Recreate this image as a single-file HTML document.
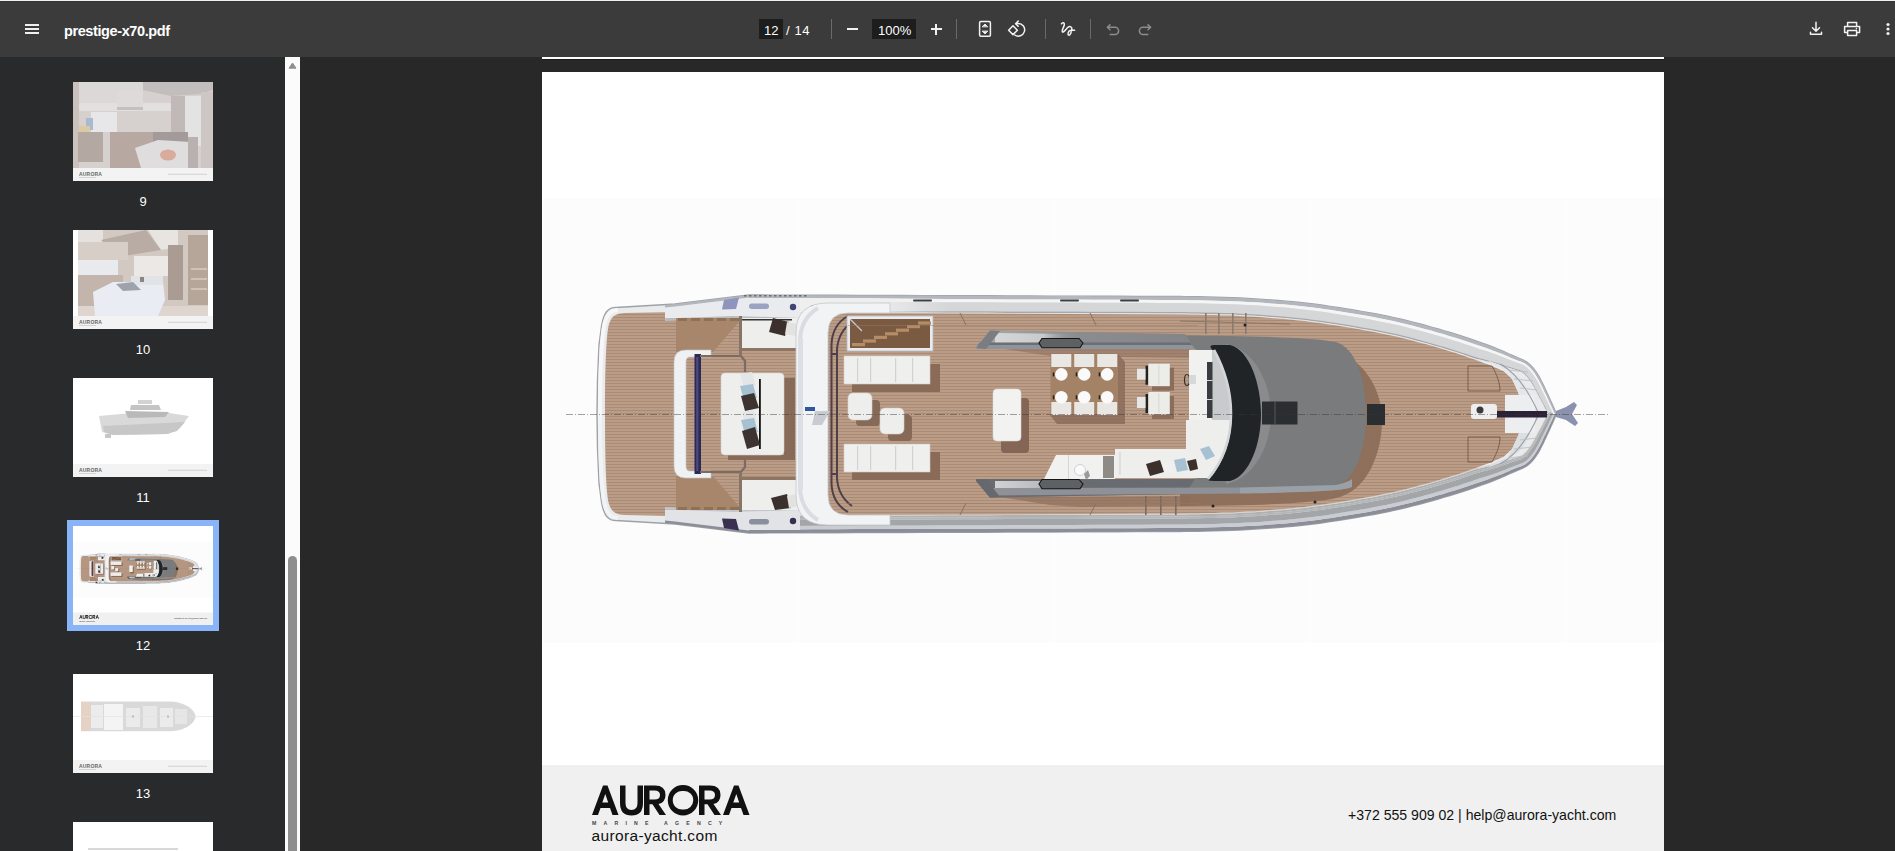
<!DOCTYPE html>
<html><head><meta charset="utf-8">
<style>
html,body{margin:0;padding:0;width:1895px;height:851px;overflow:hidden;background:#282828;font-family:"Liberation Sans",sans-serif;}
#tb{position:absolute;left:0;top:0;width:1895px;height:57px;background:#3b3b3b;border-top:1px solid #f2f2f2;box-sizing:border-box;}
#tbline{position:absolute;left:0;top:1px;width:1895px;height:1px;background:#343434;}
.abs{position:absolute;}
.t{position:absolute;color:#fff;white-space:nowrap;line-height:1;}
#side{position:absolute;left:0;top:57px;width:285px;height:794px;background:#292a2c;}
#sb{position:absolute;left:285px;top:57px;width:15px;height:794px;background:#fbfbfb;}
#thumb{position:absolute;left:288px;top:556px;width:9px;height:300px;background:#8e8e8e;border-radius:4.5px 4.5px 0 0;}
.th{position:absolute;left:73px;width:140px;height:99px;background:#fff;overflow:hidden;}
.lbl{position:absolute;width:140px;left:73px;text-align:center;color:#fff;font-size:13px;line-height:1;}
.sep{position:absolute;top:19px;width:1px;height:20px;background:#6a6a6a;}
</style></head><body>
<div id="tb"></div>
<div id="tbline"></div>
<div class="abs" style="left:25px;top:24px;width:14px;height:2px;background:#f0f0f0"></div>
<div class="abs" style="left:25px;top:28px;width:14px;height:2px;background:#f0f0f0"></div>
<div class="abs" style="left:25px;top:32px;width:14px;height:2px;background:#f0f0f0"></div>
<div class="t" id="title" style="left:64px;top:23.5px;font-size:14.5px;font-weight:bold;letter-spacing:-0.4px;">prestige-x70.pdf</div>

<div class="abs" style="left:759px;top:19px;width:24px;height:20px;background:#1d1d1d"></div>
<div class="t" style="left:764px;top:24px;font-size:13px;">12</div>
<div class="t" style="left:786px;top:24px;font-size:13px;letter-spacing:0.6px;">/ 14</div>
<div class="sep" style="left:831px"></div>
<div class="abs" style="left:847px;top:28px;width:11px;height:2px;background:#f0f0f0"></div>
<div class="abs" style="left:872px;top:19px;width:44px;height:20px;background:#1d1d1d"></div>
<div class="t" style="left:878px;top:24px;font-size:13px;">100%</div>
<div class="abs" style="left:931px;top:28px;width:11px;height:2px;background:#f0f0f0"></div>
<div class="abs" style="left:935px;top:24px;width:2px;height:11px;background:#f0f0f0"></div>
<div class="sep" style="left:956px"></div>
<div class="sep" style="left:1045px"></div>
<div class="sep" style="left:1090px"></div>


<svg class="abs" style="left:0;top:0" width="1895" height="56" viewBox="0 0 1895 56">
<g fill="none" stroke="#f2f2f2" stroke-width="1.5" stroke-linecap="round" stroke-linejoin="round">
 <rect x="979.6" y="21.6" width="10.8" height="14.6" rx="1.2"/>
 <path d="M982.3,26.6 L985,24 L987.7,26.6 Z M982.3,31.3 L985,34 L987.7,31.3 Z" fill="#f2f2f2" stroke-width="0.8"/>
 <path d="M1013,25.8 L1017.4,30.2 L1013,34.6 L1008.6,30.2 Z"/>
 <path d="M1016.5,23.6 L1018.3,23.5 A6.3,6.3 0 1,1 1014.8,35"/>
 <path d="M1018.2,21.1 L1015.6,23.7 L1018.2,26.3"/>
 <path d="M1061.4,23.8 C1062.5,22 1064.8,22.3 1064.3,25 C1063.8,27.5 1061.5,30 1062.3,31.8 C1063.2,33.2 1066,29 1068,27.3 C1070,25.8 1072.3,27 1071.8,29.5 C1071.3,32.5 1070,35.6 1068.8,35.3 C1067.5,35 1067.8,31.5 1070,30.5 C1071.5,29.9 1073,30.2 1074.6,30.2"/>
 <path d="M1816,22.2 L1816,31 M1812.5,27.7 L1816,31.2 L1819.5,27.7 M1810.5,32.2 L1810.5,34.3 L1821.5,34.3 L1821.5,32.2"/>
 <path d="M1847.6,26.3 L1847.6,22.6 L1856.6,22.6 L1856.6,26.3 M1847.6,32.6 L1844.6,32.6 L1844.6,26.5 L1859.6,26.5 L1859.6,32.6 L1856.6,32.6 M1847.6,30.6 L1856.6,30.6 L1856.6,35.6 L1847.6,35.6 Z"/>
</g>
<g fill="none" stroke="#8c8c8c" stroke-width="1.5" stroke-linecap="round" stroke-linejoin="round">
 <path d="M1110,24.8 L1107.3,27.3 L1110,29.8 M1107.5,27.3 L1115,27.3 A3.6,3.6 0 0,1 1115,34.5 L1110.2,34.5"/>
 <path d="M1148,24.8 L1150.7,27.3 L1148,29.8 M1150.5,27.3 L1143,27.3 A3.6,3.6 0 0,0 1143,34.5 L1147.8,34.5"/>
</g>
<g fill="#f2f2f2">
 <circle cx="1856.4" cy="28.6" r="0.8"/>
 <circle cx="1888" cy="24.5" r="1.6"/><circle cx="1888" cy="29" r="1.6"/><circle cx="1888" cy="33.5" r="1.6"/>
</g>
</svg>

<div id="side"></div>
<div class="th" style="top:82px"><svg width="140" height="99" viewBox="0 0 140 99">
<rect width="140" height="99" fill="#fff"/>
<rect x="0" y="0" width="140" height="86" fill="#d6d0ce"/>
<rect x="0" y="0" width="70" height="22" fill="#dcd8d7"/>
<path d="M70,0 L140,0 L140,8 L128,12 L98,14 L70,8 Z" fill="#c2bebd"/>
<rect x="0" y="21" width="100" height="8" fill="#e2dfdf"/>
<rect x="44" y="9" width="26" height="18" fill="#dedad9"/>
<rect x="44" y="25" width="26" height="3" fill="#c5bfbe"/>
<rect x="18" y="30" width="26" height="20" fill="#e7e7e9"/>
<rect x="13" y="36" width="7" height="12" fill="#a9bad0"/>
<rect x="6" y="44" width="11" height="8" fill="#d9cba4"/>
<rect x="0" y="0" width="6" height="86" fill="#cbc1bd"/>
<rect x="98" y="14" width="14" height="50" fill="#c0b9b8"/>
<rect x="112" y="14" width="16" height="50" fill="#e4e3e4"/>
<rect x="128" y="10" width="12" height="76" fill="#cdc6c4"/>
<rect x="5" y="50" width="25" height="30" fill="#b4a8a3"/>
<rect x="37" y="50" width="43" height="36" fill="#b7a9a1"/>
<rect x="80" y="50" width="35" height="12" fill="#a29b9a"/>
<path d="M62,66 L85,58 L118,60 L115,86 L68,86 Z" fill="#dfdddd"/>
<ellipse cx="95" cy="73" rx="8" ry="5.5" fill="#d8ab9d"/>
<rect x="115" y="55" width="10" height="31" fill="#b9b1af"/>
<rect x="0" y="86" width="140" height="13" fill="#f3f3f3"/><text x="6" y="93.5" font-family="Liberation Sans" font-weight="bold" font-size="5" fill="#666" letter-spacing="0.2">AURORA</text><rect x="6" y="95.3" width="17" height="0.7" fill="#c4c4c4"/><rect x="95" y="91.8" width="39" height="0.9" fill="#cdcdcd"/>
</svg></div>
<div class="lbl" style="top:195px">9</div>

<div class="th" style="top:230px"><svg width="140" height="99" viewBox="0 0 140 99">
<rect width="140" height="99" fill="#fff"/>
<rect x="5" y="0" width="130" height="86" fill="#d3c9c3"/>
<rect x="5" y="0" width="25" height="12" fill="#e5e1de"/>
<path d="M75,0 L105,0 L105,17 L88,20 Z" fill="#e8e4e0"/>
<path d="M28,10 L73,0 L88,20 L45,27 Z" fill="#b8aca5"/>
<rect x="5" y="12" width="50" height="18" fill="#d8cec8"/>
<rect x="5" y="30" width="40" height="15" fill="#e8eaee"/>
<rect x="5" y="45" width="45" height="32" fill="#c4b5ac"/>
<rect x="61" y="26" width="34" height="20" fill="#ebe8e6"/>
<rect x="95" y="15" width="15" height="55" fill="#aa9c92"/>
<rect x="115" y="5" width="20" height="70" fill="#b6a69a"/>
<rect x="118" y="38" width="16" height="2" fill="#cfc3b8"/>
<rect x="118" y="48" width="16" height="2" fill="#cfc3b8"/>
<rect x="118" y="58" width="16" height="2" fill="#cfc3b8"/>
<rect x="5" y="76" width="130" height="10" fill="#ddd5ce"/>
<path d="M20,62 L40,52 L90,52 L92,70 L85,86 L22,86 Z" fill="#e9edf3"/>
<path d="M58,46 L90,46 L90,55 L58,55 Z" fill="#e2e3e6"/>
<path d="M43,54 L60,52 L68,60 L50,61 Z" fill="#9ea3ab"/>
<rect x="67" y="47" width="4" height="5" fill="#8a8580"/>
<rect x="0" y="86" width="140" height="13" fill="#f3f3f3"/><text x="6" y="93.5" font-family="Liberation Sans" font-weight="bold" font-size="5" fill="#666" letter-spacing="0.2">AURORA</text><rect x="6" y="95.3" width="17" height="0.7" fill="#c4c4c4"/><rect x="95" y="91.8" width="39" height="0.9" fill="#cdcdcd"/>
</svg></div>
<div class="lbl" style="top:343px">10</div>

<div class="th" style="top:378px"><svg width="140" height="99" viewBox="0 0 140 99">
<rect width="140" height="99" fill="#fff"/>
<path d="M26,38 L48,36 L68,34 L96,35 L116,38 L107,50 L95,56 L40,57 L29,54 Z" fill="#d9d9d9"/>
<path d="M30,48 L112,44 L104,53 L94,56 L40,57 L31,54 Z" fill="#c7c7c7"/>
<path d="M52,33 L96,34 L92,39 L55,40 Z" fill="#b9b9b9"/>
<path d="M58,27 L86,27 L88,32 L57,32 Z" fill="#c4c4c4"/>
<rect x="65" y="22" width="14" height="4" fill="#d2d2d2"/>
<rect x="32" y="56" width="6" height="4" fill="#c7c7c7"/>
<rect x="0" y="86" width="140" height="13" fill="#f3f3f3"/><text x="6" y="93.5" font-family="Liberation Sans" font-weight="bold" font-size="5" fill="#666" letter-spacing="0.2">AURORA</text><rect x="6" y="95.3" width="17" height="0.7" fill="#c4c4c4"/><rect x="95" y="91.8" width="39" height="0.9" fill="#cdcdcd"/>
</svg></div>
<div class="lbl" style="top:491px">11</div>

<div class="abs" style="left:67px;top:520px;width:152px;height:111px;background:#8ab4f8"></div>
<div class="th" style="top:526px"><svg width="140" height="99" viewBox="542 72 1122 793"><use href="#pg"/></svg></div>
<div class="lbl" style="top:639px">12</div>

<div class="th" style="top:674px"><svg width="140" height="99" viewBox="0 0 140 99">
<rect width="140" height="99" fill="#fff"/>
<path d="M8,27.5 L98,27.5 C112,28 122,36 122.6,42.5 C122,49 112,56.8 98,57.3 L8,57.3 Z" fill="#d9d9d9"/>
<rect x="8" y="28" width="9.5" height="29" fill="#e6d2c4"/>
<rect x="18" y="31" width="12" height="23" fill="#ececec"/>
<rect x="31" y="30" width="19" height="26" fill="#f4f4f4"/>
<rect x="53" y="34" width="14" height="19" fill="#ebebeb"/>
<rect x="70" y="32" width="14" height="22" fill="#e8e8e8"/>
<rect x="87" y="34" width="13" height="19" fill="#ebebeb"/>
<rect x="102" y="35" width="12" height="15" fill="#e6e6e6"/>
<circle cx="60" cy="42.5" r="1" fill="#888"/><circle cx="95" cy="42.5" r="1" fill="#888"/>
<line x1="0" y1="42.5" x2="140" y2="42.5" stroke="#e0e0e0" stroke-width="0.6"/>
<rect x="0" y="86" width="140" height="13" fill="#f3f3f3"/><text x="6" y="93.5" font-family="Liberation Sans" font-weight="bold" font-size="5" fill="#666" letter-spacing="0.2">AURORA</text><rect x="6" y="95.3" width="17" height="0.7" fill="#c4c4c4"/><rect x="95" y="91.8" width="39" height="0.9" fill="#cdcdcd"/>
</svg></div>
<div class="lbl" style="top:787px">13</div>

<div class="th" style="top:822px"><svg width="140" height="99" viewBox="0 0 140 99">
<rect width="140" height="99" fill="#fff"/>
<rect x="15" y="26" width="90" height="2" fill="#d8d8d8"/>
</svg></div>

<div id="sb"></div>
<div id="thumb"></div>
<svg class="abs" style="left:285px;top:57px" width="15" height="16"><path d="M4,11.2 L7.5,6 L11,11.2 Z" fill="#8e8e8e" stroke="#8e8e8e" stroke-width="1" stroke-linejoin="round"/></svg>

<div class="abs" style="left:542px;top:57px;width:1122px;height:1.5px;background:#fff"></div><div class="abs" style="left:542px;top:58.5px;width:1122px;height:1.5px;background:#1b1b1b"></div>
<svg class="abs" style="left:542px;top:72px" width="1122" height="793" viewBox="542 72 1122 793">
<defs>
<linearGradient id="armT" gradientUnits="userSpaceOnUse" x1="990" y1="0" x2="1190" y2="0"><stop offset="0" stop-color="#a5a7aa"/><stop offset="0.45" stop-color="#8a8c8f"/><stop offset="1" stop-color="#838588"/></linearGradient>
<linearGradient id="sheenT" gradientUnits="userSpaceOnUse" x1="995" y1="0" x2="1075" y2="0"><stop offset="0" stop-color="#d6d7d9"/><stop offset="0.6" stop-color="#c9cacc"/><stop offset="1" stop-color="#8a8c8f" stop-opacity="0"/></linearGradient>
<linearGradient id="sheenB" gradientUnits="userSpaceOnUse" x1="995" y1="0" x2="1075" y2="0"><stop offset="0" stop-color="#d0d2d4"/><stop offset="0.6" stop-color="#b8babd"/><stop offset="1" stop-color="#686b6f" stop-opacity="0"/></linearGradient>
<linearGradient id="railW" gradientUnits="userSpaceOnUse" x1="749" y1="0" x2="949" y2="0"><stop offset="0" stop-color="#f0f0f1"/><stop offset="0.6" stop-color="#eeeeef"/><stop offset="1" stop-color="#eeeeef" stop-opacity="0"/></linearGradient>
<pattern id="teak" patternUnits="userSpaceOnUse" x="0" y="0" width="40" height="3">
<rect width="40" height="3" fill="#bb9c87"/>
<rect y="2" width="40" height="1" fill="#aa8b76"/>
</pattern>
</defs>
<g id="pg">
<rect x="542" y="72" width="1122" height="793" fill="#fff"/>
<rect x="543" y="198" width="1120" height="445" fill="#fcfcfc"/>
<rect x="798" y="198" width="1" height="445" fill="#fefefe"/>
<rect x="1054" y="198" width="1" height="445" fill="#fefefe"/>
<rect x="1310" y="198" width="1" height="445" fill="#fefefe"/>
<rect x="1566" y="198" width="1" height="445" fill="#fefefe"/>
<rect x="542" y="765" width="1122" height="100" fill="#f0f0f0"/>
<path d="M597.0,414.0 L597.5,380.0 L599.0,345.0 L601.5,326.0 L602.5,321.2 L603.7,317.2 L605.1,314.0 L606.7,311.5 L608.6,309.7 L610.7,308.4 L613.2,307.7 L616.0,307.5 L675.0,304.0 L749.0,295.0 L770.5,295.1 L792.1,295.1 L813.6,295.2 L835.2,295.3 L856.8,295.4 L878.3,295.4 L899.9,295.5 L921.4,295.6 L943.0,295.7 L964.5,295.8 L986.0,295.8 L1007.6,295.9 L1029.2,296.0 L1050.7,296.1 L1072.2,296.1 L1093.8,296.2 L1115.3,296.3 L1136.9,296.4 L1158.5,296.4 L1180.0,296.5 L1184.6,296.6 L1190.8,296.7 L1198.1,296.8 L1206.2,297.0 L1214.9,297.2 L1223.6,297.4 L1232.1,297.7 L1240.0,298.0 L1247.6,298.4 L1255.2,298.9 L1262.9,299.4 L1270.6,299.9 L1278.2,300.5 L1285.7,301.1 L1293.0,301.8 L1300.0,302.5 L1306.7,303.2 L1313.2,304.0 L1319.5,304.8 L1325.6,305.7 L1331.7,306.6 L1337.7,307.5 L1343.8,308.5 L1350.0,309.5 L1356.2,310.5 L1362.5,311.6 L1368.8,312.7 L1375.0,313.8 L1381.2,315.0 L1387.5,316.3 L1393.8,317.6 L1400.0,319.0 L1406.3,320.5 L1412.7,322.1 L1419.2,323.8 L1425.6,325.5 L1432.0,327.3 L1438.2,329.0 L1444.2,330.8 L1450.0,332.5 L1455.6,334.2 L1461.1,336.0 L1466.5,337.7 L1471.7,339.5 L1476.6,341.2 L1481.4,342.9 L1485.9,344.5 L1490.0,346.0 L1493.8,347.4 L1497.2,348.8 L1500.4,350.1 L1503.3,351.4 L1506.1,352.6 L1508.6,353.8 L1511.1,354.9 L1513.5,356.0 L1515.8,357.0 L1517.9,357.8 L1519.8,358.6 L1521.6,359.4 L1523.3,360.1 L1524.9,361.0 L1526.5,361.9 L1528.0,363.0 L1529.5,364.2 L1530.8,365.5 L1532.1,366.9 L1533.3,368.3 L1534.5,369.8 L1535.7,371.5 L1536.8,373.2 L1538.0,375.0 L1539.2,376.9 L1540.3,379.0 L1541.4,381.2 L1542.6,383.5 L1543.7,385.8 L1544.8,388.2 L1545.9,390.6 L1547.0,393.0 L1548.2,395.5 L1549.5,398.3 L1550.8,401.2 L1552.1,404.1 L1553.3,406.9 L1554.4,409.4 L1555.3,411.4 L1556.0,413.0 L1555.3,416.6 L1554.4,418.6 L1553.3,421.1 L1552.1,423.9 L1550.8,426.8 L1549.5,429.7 L1548.2,432.5 L1547.0,435.0 L1545.9,437.4 L1544.8,439.8 L1543.7,442.2 L1542.6,444.5 L1541.4,446.8 L1540.3,449.0 L1539.2,451.1 L1538.0,453.0 L1536.8,454.8 L1535.7,456.5 L1534.5,458.2 L1533.3,459.7 L1532.1,461.1 L1530.8,462.5 L1529.5,463.8 L1528.0,465.0 L1526.5,466.1 L1524.9,467.0 L1523.3,467.9 L1521.6,468.6 L1519.8,469.4 L1517.9,470.2 L1515.8,471.0 L1513.5,472.0 L1511.1,473.1 L1508.6,474.2 L1506.1,475.4 L1503.3,476.6 L1500.4,477.9 L1497.2,479.2 L1493.8,480.6 L1490.0,482.0 L1485.9,483.5 L1481.4,485.1 L1476.6,486.8 L1471.7,488.5 L1466.5,490.3 L1461.1,492.0 L1455.6,493.8 L1450.0,495.5 L1444.2,497.2 L1438.2,499.0 L1432.0,500.7 L1425.6,502.5 L1419.2,504.2 L1412.7,505.9 L1406.3,507.5 L1400.0,509.0 L1393.8,510.4 L1387.5,511.7 L1381.2,513.0 L1375.0,514.2 L1368.8,515.3 L1362.5,516.4 L1356.2,517.5 L1350.0,518.5 L1343.8,519.5 L1337.7,520.5 L1331.7,521.4 L1325.6,522.3 L1319.5,523.2 L1313.2,524.0 L1306.7,524.8 L1300.0,525.5 L1293.0,526.2 L1285.7,526.9 L1278.2,527.5 L1270.6,528.1 L1262.9,528.6 L1255.2,529.1 L1247.6,529.6 L1240.0,530.0 L1232.1,530.3 L1223.6,530.6 L1214.9,530.8 L1206.2,531.0 L1198.1,531.2 L1190.8,531.3 L1184.6,531.4 L1180.0,531.5 L1158.5,531.6 L1136.9,531.6 L1115.3,531.7 L1093.8,531.8 L1072.2,531.9 L1050.7,532.0 L1029.2,532.0 L1007.6,532.1 L986.0,532.2 L964.5,532.2 L943.0,532.3 L921.4,532.4 L899.9,532.5 L878.3,532.5 L856.8,532.6 L835.2,532.7 L813.6,532.8 L792.1,532.9 L770.5,532.9 L749.0,533.0 L675.0,524.0 L616.0,520.5 L613.2,520.3 L610.7,519.6 L608.6,518.3 L606.7,516.5 L605.1,514.0 L603.7,510.8 L602.5,506.8 L601.5,502.0 L599.0,483.0 L597.5,448.0 L597.0,414.0 Z" fill="#e9eaec" stroke="#9ea2a7" stroke-width="1.4"/>
<path d="M605,414 C605,370 606,335 609,324 Q612,313 624,313 L676,312 L676,516 L624,515 Q612,515 609,504 C606,493 605,458 605,414 Z" fill="url(#teak)"/>
<path d="M600,414 C600,375 601.5,340 604,326 Q607,310 618,310" fill="none" stroke="#f7f7f8" stroke-width="4"/>
<path d="M600,414 C600,453 601.5,488 604,502 Q607,518 618,518" fill="none" stroke="#f2f3f4" stroke-width="4"/>
<path d="M749.0,295.0 L770.5,295.1 L792.1,295.1 L813.6,295.2 L835.2,295.3 L856.8,295.4 L878.3,295.4 L899.9,295.5 L921.4,295.6 L943.0,295.7 L964.5,295.8 L986.0,295.8 L1007.6,295.9 L1029.2,296.0 L1050.7,296.1 L1072.2,296.1 L1093.8,296.2 L1115.3,296.3 L1136.9,296.4 L1158.5,296.4 L1180.0,296.5 L1184.6,296.6 L1190.8,296.7 L1198.1,296.8 L1206.2,297.0 L1214.9,297.2 L1223.6,297.4 L1232.1,297.7 L1240.0,298.0 L1247.6,298.4 L1255.2,298.9 L1262.9,299.4 L1270.6,299.9 L1278.2,300.5 L1285.7,301.1 L1293.0,301.8 L1300.0,302.5 L1306.7,303.2 L1313.2,304.0 L1319.5,304.8 L1325.6,305.7 L1331.7,306.6 L1337.7,307.5 L1343.8,308.5 L1350.0,309.5 L1356.2,310.5 L1362.5,311.6 L1368.8,312.7 L1375.0,313.8 L1381.2,315.0 L1387.5,316.3 L1393.8,317.6 L1400.0,319.0 L1406.3,320.5 L1412.7,322.1 L1419.2,323.8 L1425.6,325.5 L1432.0,327.3 L1438.2,329.0 L1444.2,330.8 L1450.0,332.5 L1455.6,334.2 L1461.1,336.0 L1466.5,337.7 L1471.7,339.5 L1476.6,341.2 L1481.4,342.9 L1485.9,344.5 L1490.0,346.0 L1493.8,347.4 L1497.2,348.8 L1500.4,350.1 L1503.3,351.4 L1506.1,352.6 L1508.6,353.8 L1511.1,354.9 L1513.5,356.0 L1515.8,357.0 L1517.9,357.8 L1519.8,358.6 L1521.6,359.4 L1523.3,360.1 L1524.9,361.0 L1526.5,361.9 L1528.0,363.0 L1529.5,364.2 L1530.8,365.5 L1532.1,366.9 L1533.3,368.3 L1534.5,369.8 L1535.7,371.5 L1536.8,373.2 L1538.0,375.0 L1539.2,376.9 L1540.3,379.0 L1541.4,381.2 L1542.6,383.5 L1543.7,385.8 L1544.8,388.2 L1545.9,390.6 L1547.0,393.0 L1548.2,395.5 L1549.5,398.3 L1550.8,401.2 L1552.1,404.1 L1553.3,406.9 L1554.4,409.4 L1555.3,411.4 L1556.0,413.0 L1554.6,413.6 L1553.9,412.1 L1552.9,410.0 L1551.8,407.5 L1550.5,404.8 L1549.2,401.9 L1547.9,399.0 L1546.6,396.3 L1545.4,393.8 L1544.2,391.4 L1543.1,389.0 L1542.0,386.6 L1540.8,384.3 L1539.7,382.1 L1538.6,380.0 L1537.4,377.9 L1536.3,376.1 L1535.1,374.3 L1534.0,372.6 L1532.8,371.1 L1531.7,369.7 L1530.5,368.3 L1529.3,367.1 L1528.0,365.9 L1526.6,364.8 L1525.2,363.8 L1523.8,363.0 L1522.2,362.3 L1520.6,361.6 L1518.8,360.9 L1516.9,360.2 L1514.8,359.4 L1512.4,358.4 L1510.0,357.4 L1507.5,356.3 L1504.9,355.2 L1502.2,354.1 L1499.3,352.9 L1496.1,351.7 L1492.6,350.4 L1488.9,349.0 L1484.7,347.6 L1480.2,346.1 L1475.5,344.5 L1470.5,342.8 L1465.4,341.0 L1460.0,339.3 L1454.5,337.6 L1449.0,335.9 L1443.2,334.1 L1437.2,332.4 L1431.0,330.6 L1424.7,328.9 L1418.3,327.2 L1411.9,325.5 L1405.5,323.9 L1399.2,322.4 L1393.0,321.0 L1386.8,319.7 L1380.6,318.5 L1374.4,317.3 L1368.1,316.1 L1361.9,315.1 L1355.7,314.0 L1349.4,313.0 L1343.3,311.9 L1337.2,311.0 L1331.2,310.0 L1325.1,309.2 L1319.0,308.3 L1312.8,307.5 L1306.3,306.7 L1299.6,306.0 L1292.6,305.3 L1285.4,304.6 L1277.9,304.0 L1270.4,303.4 L1262.7,302.8 L1255.0,302.3 L1247.4,301.9 L1239.8,301.5 L1232.0,301.2 L1223.5,300.9 L1214.8,300.7 L1206.2,300.5 L1198.0,300.3 L1190.7,300.2 L1184.6,300.1 L1180.0,300.0 L1158.4,299.9 L1136.9,299.8 L1115.3,299.8 L1093.8,299.7 L1072.2,299.6 L1050.7,299.5 L1029.1,299.5 L1007.6,299.4 L986.0,299.3 L964.5,299.2 L942.9,299.2 L921.4,299.1 L899.8,299.0 L878.3,298.9 L856.7,298.9 L835.2,298.8 L813.6,298.7 L792.1,298.6 L770.5,298.6 L749.0,298.5 Z" fill="#b3b7bd" />
<path d="M749.0,298.5 L770.5,298.6 L792.1,298.6 L813.6,298.7 L835.2,298.8 L856.7,298.9 L878.3,298.9 L899.8,299.0 L921.4,299.1 L942.9,299.2 L964.5,299.2 L986.0,299.3 L1007.6,299.4 L1029.1,299.5 L1050.7,299.5 L1072.2,299.6 L1093.8,299.7 L1115.3,299.8 L1136.9,299.8 L1158.4,299.9 L1180.0,300.0 L1184.6,300.1 L1190.7,300.2 L1198.0,300.3 L1206.2,300.5 L1214.8,300.7 L1223.5,300.9 L1232.0,301.2 L1239.8,301.5 L1247.4,301.9 L1255.0,302.3 L1262.7,302.8 L1270.4,303.4 L1277.9,304.0 L1285.4,304.6 L1292.6,305.3 L1299.6,306.0 L1306.3,306.7 L1312.8,307.5 L1319.0,308.3 L1325.1,309.2 L1331.2,310.0 L1337.2,311.0 L1343.3,311.9 L1349.4,313.0 L1355.7,314.0 L1361.9,315.1 L1368.1,316.1 L1374.4,317.3 L1380.6,318.5 L1386.8,319.7 L1393.0,321.0 L1399.2,322.4 L1405.5,323.9 L1411.9,325.5 L1418.3,327.2 L1424.7,328.9 L1431.0,330.6 L1437.2,332.4 L1443.2,334.1 L1449.0,335.9 L1454.5,337.6 L1460.0,339.3 L1465.4,341.0 L1470.5,342.8 L1475.5,344.5 L1480.2,346.1 L1484.7,347.6 L1488.9,349.0 L1492.6,350.4 L1496.1,351.7 L1499.3,352.9 L1502.2,354.1 L1504.9,355.2 L1507.5,356.3 L1510.0,357.4 L1512.4,358.4 L1514.8,359.4 L1516.9,360.2 L1518.8,360.9 L1520.6,361.6 L1522.2,362.3 L1523.8,363.0 L1525.2,363.8 L1526.6,364.8 L1528.0,365.9 L1529.3,367.1 L1530.5,368.3 L1531.7,369.7 L1532.8,371.1 L1534.0,372.6 L1535.1,374.3 L1536.3,376.1 L1537.4,377.9 L1538.6,380.0 L1539.7,382.1 L1540.8,384.3 L1542.0,386.6 L1543.1,389.0 L1544.2,391.4 L1545.4,393.8 L1546.6,396.3 L1547.9,399.0 L1549.2,401.9 L1550.5,404.8 L1551.8,407.5 L1552.9,410.0 L1553.9,412.1 L1554.6,413.6 L1553.3,414.2 L1552.6,412.6 L1551.6,410.6 L1550.5,408.1 L1549.2,405.4 L1547.9,402.5 L1546.5,399.7 L1545.2,396.9 L1544.0,394.4 L1542.8,392.0 L1541.6,389.7 L1540.5,387.3 L1539.4,385.0 L1538.2,382.8 L1537.1,380.8 L1536.0,378.8 L1534.8,377.0 L1533.6,375.3 L1532.5,373.7 L1531.4,372.2 L1530.2,370.8 L1529.1,369.6 L1527.9,368.4 L1526.7,367.3 L1525.4,366.4 L1524.1,365.5 L1522.8,364.8 L1521.4,364.2 L1519.8,363.5 L1518.0,362.9 L1516.1,362.2 L1513.9,361.4 L1511.5,360.5 L1509.0,359.5 L1506.5,358.5 L1503.9,357.4 L1501.2,356.4 L1498.3,355.2 L1495.1,354.1 L1491.7,352.9 L1487.9,351.6 L1483.7,350.3 L1479.2,348.9 L1474.5,347.3 L1469.6,345.6 L1464.4,343.9 L1459.1,342.1 L1453.7,340.4 L1448.1,338.7 L1442.4,337.0 L1436.4,335.3 L1430.2,333.5 L1423.9,331.8 L1417.5,330.1 L1411.1,328.4 L1404.8,326.8 L1398.5,325.3 L1392.4,324.0 L1386.2,322.7 L1380.0,321.4 L1373.8,320.2 L1367.6,319.1 L1361.4,318.0 L1355.2,317.0 L1348.9,315.9 L1342.8,314.9 L1336.7,313.9 L1330.7,313.0 L1324.7,312.1 L1318.6,311.3 L1312.4,310.5 L1306.0,309.7 L1299.3,309.0 L1292.4,308.3 L1285.1,307.6 L1277.7,307.0 L1270.1,306.4 L1262.5,305.8 L1254.8,305.3 L1247.2,304.9 L1239.7,304.5 L1231.8,304.2 L1223.4,303.9 L1214.7,303.7 L1206.1,303.5 L1198.0,303.3 L1190.7,303.2 L1184.5,303.1 L1180.0,303.0 L1158.4,302.9 L1136.9,302.8 L1115.3,302.8 L1093.8,302.7 L1072.2,302.6 L1050.7,302.5 L1029.1,302.5 L1007.6,302.4 L986.0,302.3 L964.5,302.2 L942.9,302.2 L921.4,302.1 L899.8,302.0 L878.3,301.9 L856.7,301.9 L835.2,301.8 L813.6,301.7 L792.1,301.6 L770.5,301.6 L749.0,301.5 Z" fill="#f5f5f6" />
<path d="M749.0,301.5 L770.5,301.6 L792.1,301.6 L813.6,301.7 L835.2,301.8 L856.7,301.9 L878.3,301.9 L899.8,302.0 L921.4,302.1 L942.9,302.2 L964.5,302.2 L986.0,302.3 L1007.6,302.4 L1029.1,302.5 L1050.7,302.5 L1072.2,302.6 L1093.8,302.7 L1115.3,302.8 L1136.9,302.8 L1158.4,302.9 L1180.0,303.0 L1184.5,303.1 L1190.7,303.2 L1198.0,303.3 L1206.1,303.5 L1214.7,303.7 L1223.4,303.9 L1231.8,304.2 L1239.7,304.5 L1247.2,304.9 L1254.8,305.3 L1262.5,305.8 L1270.1,306.4 L1277.7,307.0 L1285.1,307.6 L1292.4,308.3 L1299.3,309.0 L1306.0,309.7 L1312.4,310.5 L1318.6,311.3 L1324.7,312.1 L1330.7,313.0 L1336.7,313.9 L1342.8,314.9 L1348.9,315.9 L1355.2,317.0 L1361.4,318.0 L1367.6,319.1 L1373.8,320.2 L1380.0,321.4 L1386.2,322.7 L1392.4,324.0 L1398.5,325.3 L1404.8,326.8 L1411.1,328.4 L1417.5,330.1 L1423.9,331.8 L1430.2,333.5 L1436.4,335.3 L1442.4,337.0 L1448.1,338.7 L1453.7,340.4 L1459.1,342.1 L1464.4,343.9 L1469.6,345.6 L1474.5,347.3 L1479.2,348.9 L1483.7,350.3 L1487.9,351.6 L1491.7,352.9 L1495.1,354.1 L1498.3,355.2 L1501.2,356.4 L1503.9,357.4 L1506.5,358.5 L1509.0,359.5 L1511.5,360.5 L1513.9,361.4 L1516.1,362.2 L1518.0,362.9 L1519.8,363.5 L1521.4,364.2 L1522.8,364.8 L1524.1,365.5 L1525.4,366.4 L1526.7,367.3 L1527.9,368.4 L1529.1,369.6 L1530.2,370.8 L1531.4,372.2 L1532.5,373.7 L1533.6,375.3 L1534.8,377.0 L1536.0,378.8 L1537.1,380.8 L1538.2,382.8 L1539.4,385.0 L1540.5,387.3 L1541.6,389.7 L1542.8,392.0 L1544.0,394.4 L1545.2,396.9 L1546.5,399.7 L1547.9,402.5 L1549.2,405.4 L1550.5,408.1 L1551.6,410.6 L1552.6,412.6 L1553.3,414.2 L1549.6,415.8 L1548.9,414.3 L1547.8,412.3 L1546.6,409.8 L1545.3,407.1 L1543.9,404.3 L1542.4,401.5 L1541.1,398.8 L1539.8,396.4 L1538.5,394.0 L1537.3,391.7 L1536.1,389.4 L1534.9,387.2 L1533.8,385.1 L1532.6,383.1 L1531.5,381.4 L1530.4,379.7 L1529.2,378.2 L1528.1,376.7 L1527.0,375.4 L1525.9,374.3 L1524.9,373.3 L1523.9,372.4 L1522.9,371.7 L1521.8,371.0 L1520.8,370.5 L1519.8,370.1 L1518.7,369.7 L1517.3,369.3 L1515.6,368.8 L1513.6,368.3 L1511.3,367.6 L1508.7,366.7 L1506.1,365.9 L1503.5,365.0 L1500.9,364.1 L1498.2,363.2 L1495.3,362.3 L1492.1,361.4 L1488.7,360.4 L1485.0,359.5 L1480.8,358.4 L1476.2,357.3 L1471.5,355.8 L1466.7,354.1 L1461.6,352.4 L1456.3,350.7 L1451.0,349.0 L1445.5,347.3 L1439.9,345.7 L1433.9,343.9 L1427.8,342.2 L1421.5,340.5 L1415.2,338.8 L1408.9,337.1 L1402.7,335.6 L1396.5,334.1 L1390.5,332.8 L1384.4,331.5 L1378.3,330.2 L1372.2,329.1 L1366.0,328.0 L1359.9,326.9 L1353.7,325.8 L1347.5,324.8 L1341.3,323.8 L1335.3,322.8 L1329.4,321.9 L1323.4,321.0 L1317.4,320.2 L1311.3,319.4 L1305.0,318.6 L1298.4,317.9 L1291.5,317.2 L1284.3,316.6 L1277.0,315.9 L1269.5,315.4 L1261.9,314.8 L1254.3,314.3 L1246.7,313.9 L1239.3,313.5 L1231.5,313.1 L1223.1,312.9 L1214.5,312.6 L1205.9,312.5 L1197.8,312.3 L1190.5,312.2 L1184.3,312.1 L1179.9,312.0 L1158.4,311.9 L1136.8,311.8 L1115.3,311.8 L1093.7,311.7 L1072.2,311.6 L1050.6,311.5 L1029.1,311.5 L1007.5,311.4 L986.0,311.3 L964.4,311.2 L942.9,311.2 L921.3,311.1 L899.8,311.0 L878.2,310.9 L856.7,310.9 L835.1,310.8 L813.6,310.7 L792.0,310.6 L770.5,310.6 L748.9,310.5 Z" fill="#d5d6d8" />
<path d="M748.9,310.5 L770.5,310.6 L792.0,310.6 L813.6,310.7 L835.1,310.8 L856.7,310.9 L878.2,310.9 L899.8,311.0 L921.3,311.1 L942.9,311.2 L964.4,311.2 L986.0,311.3 L1007.5,311.4 L1029.1,311.5 L1050.6,311.5 L1072.2,311.6 L1093.7,311.7 L1115.3,311.8 L1136.8,311.8 L1158.4,311.9 L1179.9,312.0 L1184.3,312.1 L1190.5,312.2 L1197.8,312.3 L1205.9,312.5 L1214.5,312.6 L1223.1,312.9 L1231.5,313.1 L1239.3,313.5 L1246.7,313.9 L1254.3,314.3 L1261.9,314.8 L1269.5,315.4 L1277.0,315.9 L1284.3,316.6 L1291.5,317.2 L1298.4,317.9 L1305.0,318.6 L1311.3,319.4 L1317.4,320.2 L1323.4,321.0 L1329.4,321.9 L1335.3,322.8 L1341.3,323.8 L1347.5,324.8 L1353.7,325.8 L1359.9,326.9 L1366.0,328.0 L1372.2,329.1 L1378.3,330.2 L1384.4,331.5 L1390.5,332.8 L1396.5,334.1 L1402.7,335.6 L1408.9,337.1 L1415.2,338.8 L1421.5,340.5 L1427.8,342.2 L1433.9,343.9 L1439.9,345.7 L1445.5,347.3 L1451.0,349.0 L1456.3,350.7 L1461.6,352.4 L1466.7,354.1 L1471.5,355.8 L1476.2,357.3 L1480.8,358.4 L1485.0,359.5 L1488.7,360.4 L1492.1,361.4 L1495.3,362.3 L1498.2,363.2 L1500.9,364.1 L1503.5,365.0 L1506.1,365.9 L1508.7,366.7 L1511.3,367.6 L1513.6,368.3 L1515.6,368.8 L1517.3,369.3 L1518.7,369.7 L1519.8,370.1 L1520.8,370.5 L1521.8,371.0 L1522.9,371.7 L1523.9,372.4 L1524.9,373.3 L1525.9,374.3 L1527.0,375.4 L1528.1,376.7 L1529.2,378.2 L1530.4,379.7 L1531.5,381.4 L1532.6,383.1 L1533.8,385.1 L1534.9,387.2 L1536.1,389.4 L1537.3,391.7 L1538.5,394.0 L1539.8,396.4 L1541.1,398.8 L1542.4,401.5 L1543.9,404.3 L1545.3,407.1 L1546.6,409.8 L1547.8,412.3 L1548.9,414.3 L1549.6,415.8 L1549.0,416.1 L1548.2,414.6 L1547.2,412.5 L1546.0,410.1 L1544.6,407.4 L1543.2,404.6 L1541.8,401.8 L1540.4,399.2 L1539.1,396.7 L1537.8,394.4 L1536.6,392.0 L1535.4,389.7 L1534.2,387.5 L1533.0,385.5 L1531.9,383.5 L1530.7,381.8 L1529.6,380.2 L1528.5,378.7 L1527.3,377.2 L1526.3,376.0 L1525.2,374.9 L1524.2,373.9 L1523.2,373.1 L1522.2,372.4 L1521.2,371.8 L1520.3,371.3 L1519.3,371.0 L1518.2,370.7 L1516.9,370.3 L1515.2,369.8 L1513.2,369.3 L1510.9,368.6 L1508.3,367.8 L1505.7,366.9 L1503.1,366.1 L1500.4,365.2 L1497.7,364.3 L1494.8,363.5 L1491.6,362.6 L1488.2,361.7 L1484.5,360.8 L1480.3,359.8 L1475.7,358.7 L1471.0,357.2 L1466.2,355.6 L1461.1,353.8 L1455.9,352.1 L1450.5,350.4 L1445.1,348.8 L1439.4,347.1 L1433.5,345.4 L1427.4,343.6 L1421.1,341.9 L1414.8,340.2 L1408.5,338.6 L1402.3,337.0 L1396.2,335.6 L1390.1,334.2 L1384.1,332.9 L1378.0,331.7 L1371.9,330.6 L1365.8,329.4 L1359.6,328.4 L1353.4,327.3 L1347.2,326.3 L1341.1,325.3 L1335.1,324.3 L1329.2,323.4 L1323.2,322.5 L1317.2,321.7 L1311.1,320.9 L1304.8,320.1 L1298.2,319.4 L1291.4,318.7 L1284.2,318.1 L1276.9,317.4 L1269.4,316.9 L1261.8,316.3 L1254.2,315.8 L1246.6,315.4 L1239.2,315.0 L1231.4,314.6 L1223.1,314.4 L1214.5,314.1 L1205.9,314.0 L1197.8,313.8 L1190.5,313.7 L1184.3,313.6 L1179.9,313.5 L1158.4,313.4 L1136.8,313.3 L1115.3,313.3 L1093.7,313.2 L1072.2,313.1 L1050.6,313.0 L1029.1,313.0 L1007.5,312.9 L986.0,312.8 L964.4,312.7 L942.9,312.7 L921.3,312.6 L899.8,312.5 L878.2,312.4 L856.7,312.4 L835.1,312.3 L813.6,312.2 L792.0,312.1 L770.5,312.1 L748.9,312.0 Z" fill="#a6a8ab" />
<path d="M748.9,312.0 L770.5,312.1 L792.0,312.1 L813.6,312.2 L835.1,312.3 L856.7,312.4 L878.2,312.4 L899.8,312.5 L921.3,312.6 L942.9,312.7 L964.4,312.7 L986.0,312.8 L1007.5,312.9 L1029.1,313.0 L1050.6,313.0 L1072.2,313.1 L1093.7,313.2 L1115.3,313.3 L1136.8,313.3 L1158.4,313.4 L1179.9,313.5 L1184.3,313.6 L1190.5,313.7 L1197.8,313.8 L1205.9,314.0 L1214.5,314.1 L1223.1,314.4 L1231.4,314.6 L1239.2,315.0 L1246.6,315.4 L1254.2,315.8 L1261.8,316.3 L1269.4,316.9 L1276.9,317.4 L1284.2,318.1 L1291.4,318.7 L1298.2,319.4 L1304.8,320.1 L1311.1,320.9 L1317.2,321.7 L1323.2,322.5 L1329.2,323.4 L1335.1,324.3 L1341.1,325.3 L1347.2,326.3 L1353.4,327.3 L1359.6,328.4 L1365.8,329.4 L1371.9,330.6 L1378.0,331.7 L1384.1,332.9 L1390.1,334.2 L1396.2,335.6 L1402.3,337.0 L1408.5,338.6 L1414.8,340.2 L1421.1,341.9 L1427.4,343.6 L1433.5,345.4 L1439.4,347.1 L1445.1,348.8 L1450.5,350.4 L1455.9,352.1 L1461.1,353.8 L1466.2,355.6 L1471.0,357.2 L1475.7,358.7 L1480.3,359.8 L1484.5,360.8 L1488.2,361.7 L1491.6,362.6 L1494.8,363.5 L1497.7,364.3 L1500.4,365.2 L1503.1,366.1 L1505.7,366.9 L1508.3,367.8 L1510.9,368.6 L1513.2,369.3 L1515.2,369.8 L1516.9,370.3 L1518.2,370.7 L1519.3,371.0 L1520.3,371.3 L1521.2,371.8 L1522.2,372.4 L1523.2,373.1 L1524.2,373.9 L1525.2,374.9 L1526.3,376.0 L1527.3,377.2 L1528.5,378.7 L1529.6,380.2 L1530.7,381.8 L1531.9,383.5 L1533.0,385.5 L1534.2,387.5 L1535.4,389.7 L1536.6,392.0 L1537.8,394.4 L1539.1,396.7 L1540.4,399.2 L1541.8,401.8 L1543.2,404.6 L1544.6,407.4 L1546.0,410.1 L1547.2,412.5 L1548.2,414.6 L1549.0,416.1 L1548.5,416.3 L1547.7,414.8 L1546.7,412.8 L1545.5,410.3 L1544.1,407.7 L1542.7,404.9 L1541.2,402.1 L1539.8,399.4 L1538.5,397.0 L1537.2,394.6 L1536.0,392.3 L1534.8,390.0 L1533.6,387.8 L1532.4,385.8 L1531.3,383.9 L1530.2,382.1 L1529.0,380.6 L1527.9,379.1 L1526.7,377.6 L1525.7,376.4 L1524.6,375.3 L1523.7,374.4 L1522.7,373.6 L1521.7,373.0 L1520.8,372.4 L1519.8,372.0 L1518.9,371.7 L1517.9,371.4 L1516.5,371.0 L1514.9,370.6 L1512.9,370.1 L1510.5,369.4 L1507.9,368.6 L1505.3,367.8 L1502.7,366.9 L1500.0,366.1 L1497.3,365.3 L1494.4,364.4 L1491.2,363.6 L1487.9,362.7 L1484.1,361.8 L1479.9,360.9 L1475.3,359.8 L1470.6,358.4 L1465.8,356.7 L1460.7,355.0 L1455.5,353.3 L1450.2,351.6 L1444.7,349.9 L1439.1,348.2 L1433.2,346.5 L1427.1,344.8 L1420.8,343.1 L1414.5,341.4 L1408.2,339.7 L1402.0,338.2 L1395.9,336.7 L1389.9,335.4 L1383.8,334.1 L1377.8,332.9 L1371.7,331.7 L1365.5,330.6 L1359.4,329.5 L1353.2,328.5 L1347.0,327.5 L1340.9,326.5 L1334.9,325.5 L1329.0,324.6 L1323.0,323.7 L1317.1,322.9 L1310.9,322.1 L1304.7,321.3 L1298.1,320.6 L1291.2,319.9 L1284.1,319.3 L1276.8,318.6 L1269.3,318.1 L1261.7,317.5 L1254.1,317.0 L1246.5,316.6 L1239.1,316.2 L1231.4,315.8 L1223.1,315.6 L1214.4,315.3 L1205.9,315.2 L1197.8,315.0 L1190.5,314.9 L1184.3,314.8 L1179.9,314.7 L1158.4,314.6 L1136.8,314.5 L1115.3,314.5 L1093.7,314.4 L1072.2,314.3 L1050.6,314.2 L1029.1,314.2 L1007.5,314.1 L986.0,314.0 L964.4,313.9 L942.9,313.9 L921.3,313.8 L899.8,313.7 L878.2,313.6 L856.7,313.6 L835.1,313.5 L813.6,313.4 L792.0,313.3 L770.5,313.3 L748.9,313.2 Z" fill="#e3e3e3" />
<path d="M749.0,533.0 L770.5,532.9 L792.1,532.9 L813.6,532.8 L835.2,532.7 L856.8,532.6 L878.3,532.5 L899.9,532.5 L921.4,532.4 L943.0,532.3 L964.5,532.2 L986.0,532.2 L1007.6,532.1 L1029.2,532.0 L1050.7,532.0 L1072.2,531.9 L1093.8,531.8 L1115.3,531.7 L1136.9,531.6 L1158.5,531.6 L1180.0,531.5 L1184.6,531.4 L1190.8,531.3 L1198.1,531.2 L1206.2,531.0 L1214.9,530.8 L1223.6,530.6 L1232.1,530.3 L1240.0,530.0 L1247.6,529.6 L1255.2,529.1 L1262.9,528.6 L1270.6,528.1 L1278.2,527.5 L1285.7,526.9 L1293.0,526.2 L1300.0,525.5 L1306.7,524.8 L1313.2,524.0 L1319.5,523.2 L1325.6,522.3 L1331.7,521.4 L1337.7,520.5 L1343.8,519.5 L1350.0,518.5 L1356.2,517.5 L1362.5,516.4 L1368.8,515.3 L1375.0,514.2 L1381.2,513.0 L1387.5,511.7 L1393.8,510.4 L1400.0,509.0 L1406.3,507.5 L1412.7,505.9 L1419.2,504.2 L1425.6,502.5 L1432.0,500.7 L1438.2,499.0 L1444.2,497.2 L1450.0,495.5 L1455.6,493.8 L1461.1,492.0 L1466.5,490.3 L1471.7,488.5 L1476.6,486.8 L1481.4,485.1 L1485.9,483.5 L1490.0,482.0 L1493.8,480.6 L1497.2,479.2 L1500.4,477.9 L1503.3,476.6 L1506.1,475.4 L1508.6,474.2 L1511.1,473.1 L1513.5,472.0 L1515.8,471.0 L1517.9,470.2 L1519.8,469.4 L1521.6,468.6 L1523.3,467.9 L1524.9,467.0 L1526.5,466.1 L1528.0,465.0 L1529.5,463.8 L1530.8,462.5 L1532.1,461.1 L1533.3,459.7 L1534.5,458.2 L1535.7,456.5 L1536.8,454.8 L1538.0,453.0 L1539.2,451.1 L1540.3,449.0 L1541.4,446.8 L1542.6,444.5 L1543.7,442.2 L1544.8,439.8 L1545.9,437.4 L1547.0,435.0 L1548.2,432.5 L1549.5,429.7 L1550.8,426.8 L1552.1,423.9 L1553.3,421.1 L1554.4,418.6 L1555.3,416.6 L1556.0,415.0 L1554.6,414.4 L1553.9,415.9 L1552.9,418.0 L1551.8,420.5 L1550.5,423.2 L1549.2,426.1 L1547.9,429.0 L1546.6,431.7 L1545.4,434.2 L1544.2,436.6 L1543.1,439.0 L1542.0,441.4 L1540.8,443.7 L1539.7,445.9 L1538.6,448.0 L1537.4,450.1 L1536.3,451.9 L1535.1,453.7 L1534.0,455.4 L1532.8,456.9 L1531.7,458.3 L1530.5,459.7 L1529.3,460.9 L1528.0,462.1 L1526.6,463.2 L1525.2,464.2 L1523.8,465.0 L1522.2,465.7 L1520.6,466.4 L1518.8,467.1 L1516.9,467.8 L1514.8,468.6 L1512.4,469.6 L1510.0,470.6 L1507.5,471.7 L1504.9,472.8 L1502.2,473.9 L1499.3,475.1 L1496.1,476.3 L1492.6,477.6 L1488.9,479.0 L1484.7,480.4 L1480.2,481.9 L1475.5,483.5 L1470.5,485.2 L1465.4,487.0 L1460.0,488.7 L1454.5,490.4 L1449.0,492.1 L1443.2,493.9 L1437.2,495.6 L1431.0,497.4 L1424.7,499.1 L1418.3,500.8 L1411.9,502.5 L1405.5,504.1 L1399.2,505.6 L1393.0,507.0 L1386.8,508.3 L1380.6,509.5 L1374.4,510.7 L1368.1,511.9 L1361.9,512.9 L1355.7,514.0 L1349.4,515.0 L1343.3,516.1 L1337.2,517.0 L1331.2,518.0 L1325.1,518.8 L1319.0,519.7 L1312.8,520.5 L1306.3,521.3 L1299.6,522.0 L1292.6,522.7 L1285.4,523.4 L1277.9,524.0 L1270.4,524.6 L1262.7,525.2 L1255.0,525.7 L1247.4,526.1 L1239.8,526.5 L1232.0,526.8 L1223.5,527.1 L1214.8,527.3 L1206.2,527.5 L1198.0,527.7 L1190.7,527.8 L1184.6,527.9 L1180.0,528.0 L1158.4,528.1 L1136.9,528.2 L1115.3,528.2 L1093.8,528.3 L1072.2,528.4 L1050.7,528.5 L1029.1,528.5 L1007.6,528.6 L986.0,528.7 L964.5,528.8 L942.9,528.8 L921.4,528.9 L899.8,529.0 L878.3,529.1 L856.7,529.1 L835.2,529.2 L813.6,529.3 L792.1,529.4 L770.5,529.4 L749.0,529.5 Z" fill="#8b8e99" />
<path d="M749.0,529.5 L770.5,529.4 L792.1,529.4 L813.6,529.3 L835.2,529.2 L856.7,529.1 L878.3,529.1 L899.8,529.0 L921.4,528.9 L942.9,528.8 L964.5,528.8 L986.0,528.7 L1007.6,528.6 L1029.1,528.5 L1050.7,528.5 L1072.2,528.4 L1093.8,528.3 L1115.3,528.2 L1136.9,528.2 L1158.4,528.1 L1180.0,528.0 L1184.6,527.9 L1190.7,527.8 L1198.0,527.7 L1206.2,527.5 L1214.8,527.3 L1223.5,527.1 L1232.0,526.8 L1239.8,526.5 L1247.4,526.1 L1255.0,525.7 L1262.7,525.2 L1270.4,524.6 L1277.9,524.0 L1285.4,523.4 L1292.6,522.7 L1299.6,522.0 L1306.3,521.3 L1312.8,520.5 L1319.0,519.7 L1325.1,518.8 L1331.2,518.0 L1337.2,517.0 L1343.3,516.1 L1349.4,515.0 L1355.7,514.0 L1361.9,512.9 L1368.1,511.9 L1374.4,510.7 L1380.6,509.5 L1386.8,508.3 L1393.0,507.0 L1399.2,505.6 L1405.5,504.1 L1411.9,502.5 L1418.3,500.8 L1424.7,499.1 L1431.0,497.4 L1437.2,495.6 L1443.2,493.9 L1449.0,492.1 L1454.5,490.4 L1460.0,488.7 L1465.4,487.0 L1470.5,485.2 L1475.5,483.5 L1480.2,481.9 L1484.7,480.4 L1488.9,479.0 L1492.6,477.6 L1496.1,476.3 L1499.3,475.1 L1502.2,473.9 L1504.9,472.8 L1507.5,471.7 L1510.0,470.6 L1512.4,469.6 L1514.8,468.6 L1516.9,467.8 L1518.8,467.1 L1520.6,466.4 L1522.2,465.7 L1523.8,465.0 L1525.2,464.2 L1526.6,463.2 L1528.0,462.1 L1529.3,460.9 L1530.5,459.7 L1531.7,458.3 L1532.8,456.9 L1534.0,455.4 L1535.1,453.7 L1536.3,451.9 L1537.4,450.1 L1538.6,448.0 L1539.7,445.9 L1540.8,443.7 L1542.0,441.4 L1543.1,439.0 L1544.2,436.6 L1545.4,434.2 L1546.6,431.7 L1547.9,429.0 L1549.2,426.1 L1550.5,423.2 L1551.8,420.5 L1552.9,418.0 L1553.9,415.9 L1554.6,414.4 L1553.1,413.7 L1552.4,415.3 L1551.4,417.3 L1550.3,419.8 L1549.0,422.5 L1547.7,425.4 L1546.3,428.2 L1545.0,431.0 L1543.7,433.5 L1542.6,435.8 L1541.4,438.2 L1540.3,440.6 L1539.1,442.8 L1538.0,445.0 L1536.8,447.1 L1535.7,449.1 L1534.6,450.9 L1533.4,452.6 L1532.2,454.2 L1531.1,455.6 L1530.0,457.0 L1528.9,458.2 L1527.7,459.4 L1526.5,460.4 L1525.2,461.4 L1523.9,462.2 L1522.6,462.9 L1521.2,463.5 L1519.6,464.1 L1517.9,464.8 L1515.9,465.5 L1513.8,466.2 L1511.4,467.2 L1508.9,468.1 L1506.3,469.2 L1503.7,470.2 L1501.0,471.3 L1498.1,472.4 L1494.9,473.5 L1491.5,474.7 L1487.7,475.9 L1483.6,477.2 L1479.1,478.6 L1474.3,480.2 L1469.4,481.9 L1464.2,483.6 L1458.9,485.4 L1453.5,487.1 L1448.0,488.8 L1442.3,490.5 L1436.3,492.2 L1430.1,494.0 L1423.8,495.7 L1417.4,497.5 L1411.0,499.1 L1404.7,500.7 L1398.4,502.2 L1392.3,503.6 L1386.1,504.9 L1379.9,506.1 L1373.7,507.3 L1367.5,508.4 L1361.3,509.5 L1355.1,510.6 L1348.9,511.6 L1342.7,512.6 L1336.6,513.6 L1330.6,514.5 L1324.6,515.4 L1318.5,516.2 L1312.3,517.0 L1305.9,517.8 L1299.3,518.5 L1292.3,519.2 L1285.1,519.9 L1277.7,520.5 L1270.1,521.1 L1262.5,521.7 L1254.8,522.2 L1247.2,522.6 L1239.7,523.0 L1231.8,523.3 L1223.4,523.6 L1214.7,523.9 L1206.1,524.0 L1198.0,524.2 L1190.7,524.3 L1184.5,524.4 L1180.0,524.5 L1158.4,524.6 L1136.9,524.7 L1115.3,524.7 L1093.8,524.8 L1072.2,524.9 L1050.7,525.0 L1029.1,525.0 L1007.6,525.1 L986.0,525.2 L964.5,525.3 L942.9,525.3 L921.4,525.4 L899.8,525.5 L878.3,525.6 L856.7,525.6 L835.2,525.7 L813.6,525.8 L792.1,525.9 L770.5,525.9 L749.0,526.0 Z" fill="#c9ccd0" />
<path d="M749.0,526.0 L770.5,525.9 L792.1,525.9 L813.6,525.8 L835.2,525.7 L856.7,525.6 L878.3,525.6 L899.8,525.5 L921.4,525.4 L942.9,525.3 L964.5,525.3 L986.0,525.2 L1007.6,525.1 L1029.1,525.0 L1050.7,525.0 L1072.2,524.9 L1093.8,524.8 L1115.3,524.7 L1136.9,524.7 L1158.4,524.6 L1180.0,524.5 L1184.5,524.4 L1190.7,524.3 L1198.0,524.2 L1206.1,524.0 L1214.7,523.9 L1223.4,523.6 L1231.8,523.3 L1239.7,523.0 L1247.2,522.6 L1254.8,522.2 L1262.5,521.7 L1270.1,521.1 L1277.7,520.5 L1285.1,519.9 L1292.3,519.2 L1299.3,518.5 L1305.9,517.8 L1312.3,517.0 L1318.5,516.2 L1324.6,515.4 L1330.6,514.5 L1336.6,513.6 L1342.7,512.6 L1348.9,511.6 L1355.1,510.6 L1361.3,509.5 L1367.5,508.4 L1373.7,507.3 L1379.9,506.1 L1386.1,504.9 L1392.3,503.6 L1398.4,502.2 L1404.7,500.7 L1411.0,499.1 L1417.4,497.5 L1423.8,495.7 L1430.1,494.0 L1436.3,492.2 L1442.3,490.5 L1448.0,488.8 L1453.5,487.1 L1458.9,485.4 L1464.2,483.6 L1469.4,481.9 L1474.3,480.2 L1479.1,478.6 L1483.6,477.2 L1487.7,475.9 L1491.5,474.7 L1494.9,473.5 L1498.1,472.4 L1501.0,471.3 L1503.7,470.2 L1506.3,469.2 L1508.9,468.1 L1511.4,467.2 L1513.8,466.2 L1515.9,465.5 L1517.9,464.8 L1519.6,464.1 L1521.2,463.5 L1522.6,462.9 L1523.9,462.2 L1525.2,461.4 L1526.5,460.4 L1527.7,459.4 L1528.9,458.2 L1530.0,457.0 L1531.1,455.6 L1532.2,454.2 L1533.4,452.6 L1534.6,450.9 L1535.7,449.1 L1536.8,447.1 L1538.0,445.0 L1539.1,442.8 L1540.3,440.6 L1541.4,438.2 L1542.6,435.8 L1543.7,433.5 L1545.0,431.0 L1546.3,428.2 L1547.7,425.4 L1549.0,422.5 L1550.3,419.8 L1551.4,417.3 L1552.4,415.3 L1553.1,413.7 L1550.7,412.6 L1549.9,414.2 L1548.9,416.2 L1547.7,418.6 L1546.4,421.3 L1545.0,424.2 L1543.6,427.0 L1542.2,429.7 L1540.9,432.2 L1539.7,434.5 L1538.5,436.9 L1537.3,439.2 L1536.2,441.4 L1535.0,443.5 L1533.9,445.5 L1532.7,447.3 L1531.6,449.0 L1530.4,450.6 L1529.3,452.1 L1528.2,453.5 L1527.1,454.7 L1526.1,455.7 L1525.0,456.7 L1523.9,457.5 L1522.8,458.3 L1521.7,458.9 L1520.6,459.4 L1519.4,459.8 L1518.0,460.3 L1516.3,460.8 L1514.3,461.4 L1512.0,462.1 L1509.5,463.0 L1506.9,463.9 L1504.4,464.8 L1501.7,465.8 L1499.0,466.7 L1496.1,467.7 L1493.0,468.6 L1489.5,469.7 L1485.8,470.7 L1481.6,471.8 L1477.1,473.0 L1472.4,474.5 L1467.5,476.2 L1462.4,477.9 L1457.1,479.7 L1451.7,481.4 L1446.2,483.1 L1440.6,484.7 L1434.6,486.5 L1428.5,488.2 L1422.2,490.0 L1415.9,491.7 L1409.5,493.3 L1403.2,494.9 L1397.1,496.3 L1391.0,497.7 L1384.9,499.0 L1378.8,500.2 L1372.6,501.4 L1366.5,502.5 L1360.3,503.6 L1354.1,504.6 L1347.9,505.7 L1341.7,506.7 L1335.7,507.6 L1329.7,508.6 L1323.8,509.4 L1317.7,510.3 L1311.6,511.1 L1305.2,511.8 L1298.6,512.6 L1291.7,513.3 L1284.6,513.9 L1277.2,514.5 L1269.7,515.1 L1262.1,515.7 L1254.4,516.2 L1246.8,516.6 L1239.4,517.0 L1231.6,517.4 L1223.2,517.6 L1214.6,517.9 L1206.0,518.0 L1197.9,518.2 L1190.6,518.3 L1184.4,518.4 L1179.9,518.5 L1158.4,518.6 L1136.9,518.7 L1115.3,518.7 L1093.8,518.8 L1072.2,518.9 L1050.7,519.0 L1029.1,519.0 L1007.6,519.1 L986.0,519.2 L964.5,519.3 L942.9,519.3 L921.4,519.4 L899.8,519.5 L878.3,519.6 L856.7,519.6 L835.2,519.7 L813.6,519.8 L792.1,519.9 L770.5,519.9 L749.0,520.0 Z" fill="#a3a6a9" />
<path d="M749.0,520.0 L770.5,519.9 L792.1,519.9 L813.6,519.8 L835.2,519.7 L856.7,519.6 L878.3,519.6 L899.8,519.5 L921.4,519.4 L942.9,519.3 L964.5,519.3 L986.0,519.2 L1007.6,519.1 L1029.1,519.0 L1050.7,519.0 L1072.2,518.9 L1093.8,518.8 L1115.3,518.7 L1136.9,518.7 L1158.4,518.6 L1179.9,518.5 L1184.4,518.4 L1190.6,518.3 L1197.9,518.2 L1206.0,518.0 L1214.6,517.9 L1223.2,517.6 L1231.6,517.4 L1239.4,517.0 L1246.8,516.6 L1254.4,516.2 L1262.1,515.7 L1269.7,515.1 L1277.2,514.5 L1284.6,513.9 L1291.7,513.3 L1298.6,512.6 L1305.2,511.8 L1311.6,511.1 L1317.7,510.3 L1323.8,509.4 L1329.7,508.6 L1335.7,507.6 L1341.7,506.7 L1347.9,505.7 L1354.1,504.6 L1360.3,503.6 L1366.5,502.5 L1372.6,501.4 L1378.8,500.2 L1384.9,499.0 L1391.0,497.7 L1397.1,496.3 L1403.2,494.9 L1409.5,493.3 L1415.9,491.7 L1422.2,490.0 L1428.5,488.2 L1434.6,486.5 L1440.6,484.7 L1446.2,483.1 L1451.7,481.4 L1457.1,479.7 L1462.4,477.9 L1467.5,476.2 L1472.4,474.5 L1477.1,473.0 L1481.6,471.8 L1485.8,470.7 L1489.5,469.7 L1493.0,468.6 L1496.1,467.7 L1499.0,466.7 L1501.7,465.8 L1504.4,464.8 L1506.9,463.9 L1509.5,463.0 L1512.0,462.1 L1514.3,461.4 L1516.3,460.8 L1518.0,460.3 L1519.4,459.8 L1520.6,459.4 L1521.7,458.9 L1522.8,458.3 L1523.9,457.5 L1525.0,456.7 L1526.1,455.7 L1527.1,454.7 L1528.2,453.5 L1529.3,452.1 L1530.4,450.6 L1531.6,449.0 L1532.7,447.3 L1533.9,445.5 L1535.0,443.5 L1536.2,441.4 L1537.3,439.2 L1538.5,436.9 L1539.7,434.5 L1540.9,432.2 L1542.2,429.7 L1543.6,427.0 L1545.0,424.2 L1546.4,421.3 L1547.7,418.6 L1548.9,416.2 L1549.9,414.2 L1550.7,412.6 L1549.8,412.3 L1549.1,413.8 L1548.1,415.8 L1546.8,418.3 L1545.5,421.0 L1544.1,423.8 L1542.7,426.6 L1541.3,429.3 L1540.0,431.7 L1538.8,434.1 L1537.5,436.4 L1536.3,438.7 L1535.2,440.9 L1534.0,443.0 L1532.9,445.0 L1531.7,446.8 L1530.6,448.4 L1529.4,450.0 L1528.3,451.4 L1527.2,452.8 L1526.2,453.9 L1525.2,454.9 L1524.1,455.8 L1523.1,456.6 L1522.0,457.2 L1521.0,457.8 L1520.0,458.2 L1518.8,458.6 L1517.4,459.0 L1515.7,459.5 L1513.7,460.1 L1511.4,460.8 L1508.9,461.6 L1506.3,462.5 L1503.7,463.4 L1501.1,464.3 L1498.3,465.2 L1495.4,466.1 L1492.3,467.0 L1488.9,468.0 L1485.1,469.0 L1480.9,470.0 L1476.4,471.1 L1471.7,472.6 L1466.8,474.3 L1461.7,476.0 L1456.5,477.8 L1451.1,479.5 L1445.7,481.1 L1440.0,482.8 L1434.1,484.6 L1427.9,486.3 L1421.7,488.0 L1415.4,489.7 L1409.0,491.4 L1402.8,492.9 L1396.6,494.4 L1390.6,495.7 L1384.5,497.0 L1378.4,498.2 L1372.3,499.4 L1366.1,500.5 L1359.9,501.6 L1353.8,502.7 L1347.6,503.7 L1341.4,504.7 L1335.4,505.7 L1329.5,506.6 L1323.5,507.5 L1317.5,508.3 L1311.3,509.1 L1305.0,509.9 L1298.4,510.6 L1291.5,511.3 L1284.4,511.9 L1277.0,512.6 L1269.5,513.1 L1261.9,513.7 L1254.3,514.2 L1246.7,514.6 L1239.3,515.0 L1231.5,515.4 L1223.2,515.6 L1214.5,515.9 L1206.0,516.0 L1197.8,516.2 L1190.5,516.3 L1184.4,516.4 L1179.9,516.5 L1158.4,516.6 L1136.8,516.7 L1115.3,516.7 L1093.7,516.8 L1072.2,516.9 L1050.6,517.0 L1029.1,517.0 L1007.5,517.1 L986.0,517.2 L964.4,517.3 L942.9,517.3 L921.3,517.4 L899.8,517.5 L878.2,517.6 L856.7,517.6 L835.1,517.7 L813.6,517.8 L792.0,517.9 L770.5,517.9 L748.9,518.0 Z" fill="#b4b6b8" />
<path d="M748.9,518.0 L770.5,517.9 L792.0,517.9 L813.6,517.8 L835.1,517.7 L856.7,517.6 L878.2,517.6 L899.8,517.5 L921.3,517.4 L942.9,517.3 L964.4,517.3 L986.0,517.2 L1007.5,517.1 L1029.1,517.0 L1050.6,517.0 L1072.2,516.9 L1093.7,516.8 L1115.3,516.7 L1136.8,516.7 L1158.4,516.6 L1179.9,516.5 L1184.4,516.4 L1190.5,516.3 L1197.8,516.2 L1206.0,516.0 L1214.5,515.9 L1223.2,515.6 L1231.5,515.4 L1239.3,515.0 L1246.7,514.6 L1254.3,514.2 L1261.9,513.7 L1269.5,513.1 L1277.0,512.6 L1284.4,511.9 L1291.5,511.3 L1298.4,510.6 L1305.0,509.9 L1311.3,509.1 L1317.5,508.3 L1323.5,507.5 L1329.5,506.6 L1335.4,505.7 L1341.4,504.7 L1347.6,503.7 L1353.8,502.7 L1359.9,501.6 L1366.1,500.5 L1372.3,499.4 L1378.4,498.2 L1384.5,497.0 L1390.6,495.7 L1396.6,494.4 L1402.8,492.9 L1409.0,491.4 L1415.4,489.7 L1421.7,488.0 L1427.9,486.3 L1434.1,484.6 L1440.0,482.8 L1445.7,481.1 L1451.1,479.5 L1456.5,477.8 L1461.7,476.0 L1466.8,474.3 L1471.7,472.6 L1476.4,471.1 L1480.9,470.0 L1485.1,469.0 L1488.9,468.0 L1492.3,467.0 L1495.4,466.1 L1498.3,465.2 L1501.1,464.3 L1503.7,463.4 L1506.3,462.5 L1508.9,461.6 L1511.4,460.8 L1513.7,460.1 L1515.7,459.5 L1517.4,459.0 L1518.8,458.6 L1520.0,458.2 L1521.0,457.8 L1522.0,457.2 L1523.1,456.6 L1524.1,455.8 L1525.2,454.9 L1526.2,453.9 L1527.2,452.8 L1528.3,451.4 L1529.4,450.0 L1530.6,448.4 L1531.7,446.8 L1532.9,445.0 L1534.0,443.0 L1535.2,440.9 L1536.3,438.7 L1537.5,436.4 L1538.8,434.1 L1540.0,431.7 L1541.3,429.3 L1542.7,426.6 L1544.1,423.8 L1545.5,421.0 L1546.8,418.3 L1548.1,415.8 L1549.1,413.8 L1549.8,412.3 L1549.0,411.9 L1548.2,413.4 L1547.2,415.5 L1546.0,417.9 L1544.6,420.6 L1543.2,423.4 L1541.8,426.2 L1540.4,428.8 L1539.1,431.3 L1537.8,433.6 L1536.6,436.0 L1535.4,438.3 L1534.2,440.5 L1533.0,442.5 L1531.9,444.5 L1530.7,446.2 L1529.6,447.8 L1528.5,449.3 L1527.3,450.8 L1526.3,452.0 L1525.2,453.1 L1524.2,454.1 L1523.2,454.9 L1522.2,455.6 L1521.2,456.2 L1520.3,456.7 L1519.3,457.0 L1518.2,457.3 L1516.9,457.7 L1515.2,458.2 L1513.2,458.7 L1510.9,459.4 L1508.3,460.2 L1505.7,461.1 L1503.1,461.9 L1500.4,462.8 L1497.7,463.7 L1494.8,464.5 L1491.6,465.4 L1488.2,466.3 L1484.5,467.2 L1480.3,468.2 L1475.7,469.3 L1471.0,470.8 L1466.2,472.4 L1461.1,474.2 L1455.9,475.9 L1450.5,477.6 L1445.1,479.2 L1439.4,480.9 L1433.5,482.6 L1427.4,484.4 L1421.1,486.1 L1414.8,487.8 L1408.5,489.4 L1402.3,491.0 L1396.2,492.4 L1390.1,493.8 L1384.1,495.1 L1378.0,496.3 L1371.9,497.4 L1365.8,498.6 L1359.6,499.6 L1353.4,500.7 L1347.2,501.7 L1341.1,502.7 L1335.1,503.7 L1329.2,504.6 L1323.2,505.5 L1317.2,506.3 L1311.1,507.1 L1304.8,507.9 L1298.2,508.6 L1291.4,509.3 L1284.2,509.9 L1276.9,510.6 L1269.4,511.1 L1261.8,511.7 L1254.2,512.2 L1246.6,512.6 L1239.2,513.0 L1231.4,513.4 L1223.1,513.6 L1214.5,513.9 L1205.9,514.0 L1197.8,514.2 L1190.5,514.3 L1184.3,514.4 L1179.9,514.5 L1158.4,514.6 L1136.8,514.7 L1115.3,514.7 L1093.7,514.8 L1072.2,514.9 L1050.6,515.0 L1029.1,515.0 L1007.5,515.1 L986.0,515.2 L964.4,515.3 L942.9,515.3 L921.3,515.4 L899.8,515.5 L878.2,515.6 L856.7,515.6 L835.1,515.7 L813.6,515.8 L792.0,515.9 L770.5,515.9 L748.9,516.0 Z" fill="#aeb0b2" />
<path d="M748.9,516.0 L770.5,515.9 L792.0,515.9 L813.6,515.8 L835.1,515.7 L856.7,515.6 L878.2,515.6 L899.8,515.5 L921.3,515.4 L942.9,515.3 L964.4,515.3 L986.0,515.2 L1007.5,515.1 L1029.1,515.0 L1050.6,515.0 L1072.2,514.9 L1093.7,514.8 L1115.3,514.7 L1136.8,514.7 L1158.4,514.6 L1179.9,514.5 L1184.3,514.4 L1190.5,514.3 L1197.8,514.2 L1205.9,514.0 L1214.5,513.9 L1223.1,513.6 L1231.4,513.4 L1239.2,513.0 L1246.6,512.6 L1254.2,512.2 L1261.8,511.7 L1269.4,511.1 L1276.9,510.6 L1284.2,509.9 L1291.4,509.3 L1298.2,508.6 L1304.8,507.9 L1311.1,507.1 L1317.2,506.3 L1323.2,505.5 L1329.2,504.6 L1335.1,503.7 L1341.1,502.7 L1347.2,501.7 L1353.4,500.7 L1359.6,499.6 L1365.8,498.6 L1371.9,497.4 L1378.0,496.3 L1384.1,495.1 L1390.1,493.8 L1396.2,492.4 L1402.3,491.0 L1408.5,489.4 L1414.8,487.8 L1421.1,486.1 L1427.4,484.4 L1433.5,482.6 L1439.4,480.9 L1445.1,479.2 L1450.5,477.6 L1455.9,475.9 L1461.1,474.2 L1466.2,472.4 L1471.0,470.8 L1475.7,469.3 L1480.3,468.2 L1484.5,467.2 L1488.2,466.3 L1491.6,465.4 L1494.8,464.5 L1497.7,463.7 L1500.4,462.8 L1503.1,461.9 L1505.7,461.1 L1508.3,460.2 L1510.9,459.4 L1513.2,458.7 L1515.2,458.2 L1516.9,457.7 L1518.2,457.3 L1519.3,457.0 L1520.3,456.7 L1521.2,456.2 L1522.2,455.6 L1523.2,454.9 L1524.2,454.1 L1525.2,453.1 L1526.3,452.0 L1527.3,450.8 L1528.5,449.3 L1529.6,447.8 L1530.7,446.2 L1531.9,444.5 L1533.0,442.5 L1534.2,440.5 L1535.4,438.3 L1536.6,436.0 L1537.8,433.6 L1539.1,431.3 L1540.4,428.8 L1541.8,426.2 L1543.2,423.4 L1544.6,420.6 L1546.0,417.9 L1547.2,415.5 L1548.2,413.4 L1549.0,411.9 L1548.5,411.7 L1547.7,413.2 L1546.7,415.2 L1545.5,417.7 L1544.1,420.3 L1542.7,423.1 L1541.2,425.9 L1539.8,428.6 L1538.5,431.0 L1537.2,433.4 L1536.0,435.7 L1534.8,438.0 L1533.6,440.2 L1532.4,442.2 L1531.3,444.1 L1530.2,445.9 L1529.0,447.4 L1527.9,448.9 L1526.7,450.4 L1525.7,451.6 L1524.6,452.7 L1523.7,453.6 L1522.7,454.4 L1521.7,455.0 L1520.8,455.6 L1519.8,456.0 L1518.9,456.3 L1517.9,456.6 L1516.5,457.0 L1514.9,457.4 L1512.9,457.9 L1510.5,458.6 L1507.9,459.4 L1505.3,460.2 L1502.7,461.1 L1500.0,461.9 L1497.3,462.7 L1494.4,463.6 L1491.2,464.4 L1487.9,465.3 L1484.1,466.2 L1479.9,467.1 L1475.3,468.2 L1470.6,469.6 L1465.8,471.3 L1460.7,473.0 L1455.5,474.7 L1450.2,476.4 L1444.7,478.1 L1439.1,479.8 L1433.2,481.5 L1427.1,483.2 L1420.8,484.9 L1414.5,486.6 L1408.2,488.3 L1402.0,489.8 L1395.9,491.3 L1389.9,492.6 L1383.8,493.9 L1377.8,495.1 L1371.7,496.3 L1365.5,497.4 L1359.4,498.5 L1353.2,499.5 L1347.0,500.5 L1340.9,501.5 L1334.9,502.5 L1329.0,503.4 L1323.0,504.3 L1317.1,505.1 L1310.9,505.9 L1304.7,506.7 L1298.1,507.4 L1291.2,508.1 L1284.1,508.7 L1276.8,509.4 L1269.3,509.9 L1261.7,510.5 L1254.1,511.0 L1246.5,511.4 L1239.1,511.8 L1231.4,512.2 L1223.1,512.4 L1214.4,512.7 L1205.9,512.8 L1197.8,513.0 L1190.5,513.1 L1184.3,513.2 L1179.9,513.3 L1158.4,513.4 L1136.8,513.5 L1115.3,513.5 L1093.7,513.6 L1072.2,513.7 L1050.6,513.8 L1029.1,513.8 L1007.5,513.9 L986.0,514.0 L964.4,514.1 L942.9,514.1 L921.3,514.2 L899.8,514.3 L878.2,514.4 L856.7,514.4 L835.1,514.5 L813.6,514.6 L792.0,514.7 L770.5,514.7 L748.9,514.8 Z" fill="#d6d2ce" />
<rect x="749" y="298" width="200" height="14" fill="url(#railW)"/>
<rect x="913" y="299.6" width="19" height="2" rx="1" fill="#3d3f42"/>
<rect x="1060" y="299.6" width="19" height="2" rx="1" fill="#3d3f42"/>
<rect x="1120" y="299.6" width="19" height="2" rx="1" fill="#3d3f42"/>
<path d="M665,306 L675,305.5 L749,298 L800,298 L800,318 L733,316 L665,318.5 Z" fill="#e9ebee"/>
<path d="M665,305 L675,304 L749,295 L760,295 L760,297.5 L749,297.5 L675,306.5 L665,307.5 Z" fill="#b3b7bd"/>
<path d="M665,318.5 L733,316 L800,318 L800,320.5 L733,319 L665,321 Z" fill="#b9bcc1"/>
<path d="M665,522 L675,522.5 L749,530 L800,530 L800,510 L733,512 L665,509.5 Z" fill="#e1e3e6"/>
<path d="M665,523 L675,524 L749,533 L760,533 L760,530.5 L749,530.5 L675,521.5 L665,520.5 Z" fill="#8b8e99"/>
<path d="M665,509.5 L733,512 L800,510 L800,507.5 L733,509 L665,507 Z" fill="#c3c6ca"/>
<path d="M724,300 L739,297.5 L736,309 L722,309.5 Z" fill="#8e94bb"/>
<path d="M724,528 L739,530.5 L736,519 L722,518.5 Z" fill="#3a3050"/>
<rect x="749" y="303.5" width="20" height="5.5" rx="2.7" fill="#9ba3c4"/>
<circle cx="793" cy="307" r="3.2" fill="#3f4470"/>
<path d="M807,310 L812,305 L816,305 L810,311 Z" fill="#7d84a8"/>
<rect x="749" y="519" width="20" height="5.5" rx="2.7" fill="#8a8f9e"/>
<circle cx="793" cy="521" r="3.2" fill="#2f3350"/>
<rect x="744" y="295" width="2.5" height="1.5" fill="#6a6d72"/>
<rect x="749" y="295" width="2.5" height="1.5" fill="#6a6d72"/>
<rect x="754" y="295" width="2.5" height="1.5" fill="#6a6d72"/>
<rect x="759" y="295" width="2.5" height="1.5" fill="#6a6d72"/>
<rect x="764" y="295" width="2.5" height="1.5" fill="#6a6d72"/>
<rect x="769" y="295" width="2.5" height="1.5" fill="#6a6d72"/>
<rect x="774" y="295" width="2.5" height="1.5" fill="#6a6d72"/>
<rect x="779" y="295" width="2.5" height="1.5" fill="#6a6d72"/>
<rect x="784" y="295" width="2.5" height="1.5" fill="#6a6d72"/>
<rect x="789" y="295" width="2.5" height="1.5" fill="#6a6d72"/>
<rect x="794" y="295" width="2.5" height="1.5" fill="#6a6d72"/>
<rect x="799" y="295" width="2.5" height="1.5" fill="#6a6d72"/>
<rect x="804" y="295" width="2.5" height="1.5" fill="#6a6d72"/>
<rect x="676" y="318" width="122" height="192" fill="url(#teak)"/>
<path d="M676,318 L742,318 L713,352 L676,352 Z" fill="#a8866b"/>
<path d="M676,510 L742,510 L713,476 L676,476 Z" fill="#a8866b"/>
<rect x="678" y="318" width="9" height="3" fill="#8a6a52" opacity="0.8"/>
<rect x="678" y="507" width="9" height="3" fill="#8a6a52" opacity="0.8"/>
<rect x="691" y="318" width="9" height="3" fill="#8a6a52" opacity="0.8"/>
<rect x="691" y="507" width="9" height="3" fill="#8a6a52" opacity="0.8"/>
<rect x="704" y="318" width="9" height="3" fill="#8a6a52" opacity="0.8"/>
<rect x="704" y="507" width="9" height="3" fill="#8a6a52" opacity="0.8"/>
<rect x="717" y="318" width="9" height="3" fill="#8a6a52" opacity="0.8"/>
<rect x="717" y="507" width="9" height="3" fill="#8a6a52" opacity="0.8"/>
<rect x="730" y="318" width="9" height="3" fill="#8a6a52" opacity="0.8"/>
<rect x="730" y="507" width="9" height="3" fill="#8a6a52" opacity="0.8"/>
<path d="M711,350 L686,350 Q674,350 674,362 L674,466 Q674,478 686,478 L711,478 L711,471 L690,471 Q686,471 686,466 L686,362 Q686,357 690,357 L711,357 Z" fill="#f0f1f3" stroke="#c2c5c9" stroke-width="0.7"/>
<rect x="694.5" y="354" width="6.5" height="120" fill="#2c2a55"/>
<rect x="696.2" y="357" width="2.2" height="114" fill="#4c4a80"/>
<path d="M700,356 L741,356 L745,361 L745,372 M700,472 L741,472 L745,467 L745,456" stroke="#7a6c63" stroke-width="2.2" fill="none"/>
<rect x="741" y="318" width="57" height="31" fill="#eeeeec"/>
<rect x="741" y="479" width="57" height="31" fill="#eeeeec"/>
<rect x="741" y="348" width="57" height="3" fill="#8f7563"/>
<rect x="741" y="477" width="57" height="3" fill="#8f7563"/>
<rect x="739" y="316" width="3" height="40" fill="#877568"/>
<rect x="739" y="472" width="3" height="40" fill="#877568"/>
<rect x="742" y="319" width="50" height="1.5" fill="#333"/>
<path d="M773,318 L789,322 L785,336 L769,332 Z" fill="#3b302c"/>
<path d="M787,322 L798,324 L796,336 L785,334 Z" fill="#e2e2e0"/>
<path d="M771,498 L787,494 L791,508 L775,510 Z" fill="#3b302c"/>
<path d="M787,496 L797,494 L799,506 L789,508 Z" fill="#e2e2e0"/>
<path d="M784,378 L795,378 L795,460 L728,460 L728,455 L784,455 Z" fill="#876a57"/>
<rect x="721" y="373" width="63" height="82" rx="4" fill="#eeeeec" stroke="#d2d2d0" stroke-width="0.6"/>
<rect x="759" y="379" width="1.8" height="70" fill="#111"/>
<path d="M740,374 L752,372 L756,386 L744,388 Z" fill="#e3e6e8"/>
<path d="M740,386 L753,384 L757,398 L744,400 Z" fill="#a6c1d1"/>
<path d="M741,396 L754,393 L759,408 L745,411 Z" fill="#3d3330"/>
<path d="M742,412 L754,410 L757,422 L745,424 Z" fill="#e3e6e8"/>
<path d="M741,420 L754,418 L758,432 L745,434 Z" fill="#a6c1d1"/>
<path d="M742,431 L755,427 L760,445 L747,449 Z" fill="#3d3330"/>
<path d="M848.0,313.0 L1179.6,314.5 L1184.3,314.6 L1190.5,314.7 L1197.8,314.8 L1205.9,315.0 L1214.4,315.1 L1223.1,315.4 L1231.4,315.6 L1239.1,316.0 L1246.6,316.4 L1254.1,316.8 L1261.7,317.3 L1269.3,317.9 L1276.8,318.4 L1284.1,319.1 L1291.3,319.7 L1298.1,320.4 L1304.7,321.1 L1311.0,321.9 L1317.1,322.7 L1323.1,323.5 L1329.0,324.4 L1334.9,325.3 L1340.9,326.3 L1347.1,327.3 L1353.3,328.3 L1359.4,329.3 L1365.6,330.4 L1371.7,331.5 L1377.8,332.7 L1383.9,333.9 L1389.9,335.2 L1396.0,336.5 L1402.1,338.0 L1408.3,339.5 L1414.6,341.2 L1420.9,342.9 L1427.1,344.6 L1433.2,346.3 L1439.2,348.1 L1444.8,349.7 L1450.2,351.4 L1455.6,353.1 L1460.8,354.8 L1465.8,356.5 L1470.7,358.2 L1475.3,359.8 L1479.7,361.4 L1483.7,362.9 L1487.3,364.2 L1490.5,365.5 L1493.4,366.7 L1496.1,367.9 L1498.7,369.0 L1501.2,370.2 L1503.7,371.3 L1512.0,379.0 L1518.0,392.0 L1519.0,395.0 L1505.0,395.0 L1505.0,414.0 L1505.0,433.0 L1519.0,433.0 L1518.0,436.0 L1512.0,449.0 L1503.7,456.7 L1501.2,457.8 L1498.7,459.0 L1496.1,460.1 L1493.4,461.3 L1490.5,462.5 L1487.3,463.8 L1483.7,465.1 L1479.7,466.6 L1475.3,468.2 L1470.7,469.8 L1465.8,471.5 L1460.8,473.2 L1455.6,474.9 L1450.2,476.6 L1444.8,478.3 L1439.2,479.9 L1433.2,481.7 L1427.1,483.4 L1420.9,485.1 L1414.6,486.8 L1408.3,488.5 L1402.1,490.0 L1396.0,491.5 L1389.9,492.8 L1383.9,494.1 L1377.8,495.3 L1371.7,496.5 L1365.6,497.6 L1359.4,498.7 L1353.3,499.7 L1347.1,500.7 L1340.9,501.7 L1334.9,502.7 L1329.0,503.6 L1323.1,504.5 L1317.1,505.3 L1311.0,506.1 L1304.7,506.9 L1298.1,507.6 L1291.3,508.3 L1284.1,508.9 L1276.8,509.6 L1269.3,510.1 L1261.7,510.7 L1254.1,511.2 L1246.6,511.6 L1239.1,512.0 L1231.4,512.4 L1223.1,512.6 L1214.4,512.9 L1205.9,513.0 L1197.8,513.2 L1190.5,513.3 L1184.3,513.4 L1179.6,513.5 L848,515 Q828,515 828,495 L828,333 Q828,313 848,313 Z" fill="url(#teak)"/>
<path d="M1488.0,360.5 L1491.2,363.6 L1494.2,364.9 L1496.9,366.1 L1499.5,367.2 L1502.0,368.4 L1504.5,369.5 L1507.0,370.6 L1509.5,371.7 L1511.8,372.7 L1513.7,373.4 L1515.2,374.1 L1516.3,374.6 L1517.1,375.0 L1517.7,375.3 L1518.2,375.7 L1518.9,376.2 L1519.5,376.8 L1520.2,377.5 L1520.9,378.4 L1521.7,379.4 L1522.5,380.6 L1523.5,382.0 L1524.4,383.4 L1525.3,384.9 L1526.2,386.6 L1527.1,388.4 L1528.1,390.4 L1529.2,392.6 L1530.3,394.9 L1531.4,397.4 L1532.5,399.8 L1533.7,402.2 L1534.9,404.9 L1536.2,407.8 L1537.4,410.6 L1538.7,413.4 L1539.8,415.8 L1540.7,417.9 L1541.4,419.5 L1535.0,414.0 L1519.0,414.0 L1519.0,395.0 L1518.0,392.0 L1512.0,379.0 L1505.0,367.0 Z" fill="#e4e6e9"/>
<path d="M1488.0,467.5 L1491.2,464.4 L1494.2,463.1 L1496.9,461.9 L1499.5,460.8 L1502.0,459.6 L1504.5,458.5 L1507.0,457.4 L1509.5,456.3 L1511.8,455.3 L1513.7,454.6 L1515.2,453.9 L1516.3,453.4 L1517.1,453.0 L1517.7,452.7 L1518.2,452.3 L1518.9,451.8 L1519.5,451.2 L1520.2,450.5 L1520.9,449.6 L1521.7,448.6 L1522.5,447.4 L1523.5,446.0 L1524.4,444.6 L1525.3,443.1 L1526.2,441.4 L1527.1,439.6 L1528.1,437.6 L1529.2,435.4 L1530.3,433.1 L1531.4,430.6 L1532.5,428.2 L1533.7,425.8 L1534.9,423.1 L1536.2,420.2 L1537.4,417.4 L1538.7,414.6 L1539.8,412.2 L1540.7,410.1 L1541.4,408.5 L1535.0,414.0 L1519.0,414.0 L1519.0,433.0 L1518.0,436.0 L1512.0,449.0 L1505.0,461.0 Z" fill="#dcdfe2"/>
<rect x="1505" y="395" width="30" height="38" fill="#eceef0"/>
<path d="M1500,364 C1515,372 1528,390 1538,412 M1500,464 C1515,456 1528,438 1538,416" stroke="#9a9ea4" stroke-width="1.1" fill="none"/>
<path d="M1508,370 L1528,372 M1514,379 L1533,381 M1520,388 L1537,390 M1508,458 L1528,456 M1514,449 L1533,447 M1520,440 L1537,438" stroke="#b7bbc0" stroke-width="0.8" fill="none"/>
<path d="M828,303 L890,303 L890,313 L848,313 Q828,313 828,333 L828,495 Q828,515 848,515 L890,515 L890,525 L828,525 Q796,525 796,495 L796,333 Q796,303 828,303 Z" fill="#f2f3f5" stroke="#c4c7cb" stroke-width="0.8"/>
<path d="M800,340 Q801,318 818,308 M800,488 Q801,510 818,520" stroke="#d9dce2" stroke-width="4" fill="none"/>
<rect x="798" y="338" width="5" height="152" fill="#dcdfe4"/>
<path d="M831.5,414 L831.5,345 Q832,325 848,316 M837,414 L837,350 Q838,332 852,322 M831.5,354 L837,354" stroke="#4e4048" stroke-width="2" fill="none"/>
<g transform="matrix(1,0,0,-1,0,828)"><path d="M831.5,414 L831.5,345 Q832,325 848,316 M837,414 L837,350 Q838,332 852,322 M831.5,354 L837,354" stroke="#4e4048" stroke-width="2" fill="none"/></g>
<rect x="805" y="407" width="10" height="4" fill="#2f56a0"/>
<path d="M815,411 L830,411 L822,425 L812,425 Z" fill="#c8ccd2"/>
<rect x="847" y="316" width="86" height="35" fill="#e9ebee" stroke="#b5b9be" stroke-width="0.8"/>
<rect x="850" y="319" width="80" height="29" fill="#7a5a40"/>
<rect x="852" y="343.0" width="13" height="3.2" fill="#b48d68"/>
<rect x="863" y="339.4" width="13" height="3.2" fill="#b48d68"/>
<rect x="874" y="335.8" width="13" height="3.2" fill="#b48d68"/>
<rect x="885" y="332.2" width="13" height="3.2" fill="#b48d68"/>
<rect x="896" y="328.6" width="13" height="3.2" fill="#b48d68"/>
<rect x="907" y="325.0" width="13" height="3.2" fill="#b48d68"/>
<rect x="918" y="321.4" width="13" height="3.2" fill="#b48d68"/>
<path d="M850,319 L862,331" stroke="#c8cdd2" stroke-width="1.2"/>
<rect x="852" y="364" width="88" height="28" fill="#8a6b57"/>
<rect x="844" y="356" width="86" height="28" fill="#efefee" stroke="#cdcdcc" stroke-width="0.6"/>
<rect x="857" y="358" width="1.2" height="24" fill="#d2d2d2"/>
<rect x="870" y="358" width="1.2" height="24" fill="#d2d2d2"/>
<rect x="895" y="358" width="1.2" height="24" fill="#d2d2d2"/>
<rect x="912" y="358" width="1.2" height="24" fill="#d2d2d2"/>
<rect x="852" y="452" width="88" height="28" fill="#8a6b57"/>
<rect x="844" y="444" width="86" height="28" fill="#efefee" stroke="#cdcdcc" stroke-width="0.6"/>
<rect x="857" y="446" width="1.2" height="24" fill="#d2d2d2"/>
<rect x="870" y="446" width="1.2" height="24" fill="#d2d2d2"/>
<rect x="895" y="446" width="1.2" height="24" fill="#d2d2d2"/>
<rect x="912" y="446" width="1.2" height="24" fill="#d2d2d2"/>
<rect x="856" y="400" width="24" height="26" rx="4" fill="#876957"/>
<rect x="848" y="393" width="24" height="27" rx="5" fill="#eeeeec" stroke="#d4d4d2" stroke-width="0.6"/>
<rect x="888" y="415" width="24" height="26" rx="4" fill="#876957"/>
<rect x="880" y="408" width="24" height="26" rx="5" fill="#eeeeec" stroke="#d4d4d2" stroke-width="0.6"/>
<rect x="1001" y="398" width="28" height="55" rx="4" fill="#846556"/>
<rect x="993" y="389" width="28" height="52" rx="4" fill="#f2f2f1" stroke="#d6d6d4" stroke-width="0.6"/>
<path d="M1300,346 C1318,347 1330,349 1336,352 C1360,358 1382,385 1382,420 C1382,455 1366,492 1336,498 C1310,504 1250,505.5 1180,506 L1180,490 L1300,490 Z" fill="#8a6c58" opacity="0.9"/>
<path d="M1005,349 L1190,349 L1200,358 L1050,356 Z" fill="#8c6e5a" opacity="0.55"/>
<path d="M1000,497 L1190,496 L1190,506 L1080,507 L1050,505 Z" fill="#8c6e5a" opacity="0.7"/>
<path d="M990,330.5 L1180,335.5 C1250,336 1310,337 1336,342 C1356,348 1366,380 1366,414 C1366,448 1356,480 1336,486 C1310,492 1250,493.5 1180,494 L990,497.5 L976,481 L976,479 L1190,479 C1215,479 1232,450 1232,414 C1232,378 1215,349 1190,349 L976,349 L976,347 Z" fill="#7a7b7d"/>
<path d="M990,330.5 L1185,334 L1195,349 L976,349 L976,347 Z" fill="url(#armT)"/>
<path d="M995,333 L1075,334 L1075,341 L995,345 Z" fill="url(#sheenT)"/>
<path d="M980,342.5 L1190,342.5 L1192,345 L978,345 Z" fill="#6b6e72"/>
<path d="M978,345 L1192,345 L1195,349 L976,349 Z" fill="#8e949b"/>
<path d="M990,330.5 L1000,331 L986,349 L976,348 Z" fill="#7a7d81"/>
<path d="M990,497.5 L1185,494 L1195,479 L976,479 L976,481 Z" fill="#686b6f"/>
<path d="M995,481 L1075,481 L1075,487 L995,489 Z" fill="url(#sheenB)"/>
<path d="M992,495.5 L1240,493.5 L1240,487.5 L986,488 Z" fill="#8e9298"/>
<path d="M990,497.5 L1000,497 L986,479 L976,480 Z" fill="#65686c"/>
<path d="M1240,487.5 L1336,485 C1345,483 1350,481 1352,479 L1352,487 C1345,490 1330,492 1240,493.5 Z" fill="#9aa0a8"/>
<path d="M1042,338.5 L1079,338.5 L1083,343 L1080,347.7 L1042,347.7 L1039,343 Z" fill="#5e6164" stroke="#151515" stroke-width="1.1"/>
<path d="M1042,479.5 L1079,479.5 L1083,484 L1080,488.7 L1042,488.7 L1039,484 Z" fill="#5e6164" stroke="#151515" stroke-width="1.1"/>
<path d="M1226,344 C1256,350 1271,385 1271,414 C1271,443 1256,478 1226,484 L1226,470 C1245,460 1261,440 1261,414 C1261,388 1245,368 1226,358 Z" fill="#8a8b8d"/>
<path d="M1214,345 L1230,345 C1250,350 1261,385 1261,414 C1261,443 1250,476 1230,481 L1214,481 Q1206,481 1209,478.5 C1224,462 1232,440 1232,414 C1232,388 1224,366 1212,349.5 Q1208,345 1214,345 Z" fill="#202427"/>
<rect x="1262" y="401.5" width="35.5" height="23" fill="#2a2e31"/>
<rect x="1274.5" y="401.5" width="1" height="23" fill="#55585b"/>
<rect x="1367" y="404" width="18" height="21" fill="#2a2e31"/>
<path d="M1189,350 L1214,350 C1224,368 1230,392 1231,414 L1231,420 L1189,420 Z" fill="#f1f1f0"/>
<path d="M1214,350 C1224,368 1230,392 1231,414 C1231,440 1225,458 1212,476 L1212,350 Z" fill="#c9cacc"/>
<rect x="1207" y="362" width="5.5" height="56" fill="#3a3d40"/>
<rect x="1207" y="380" width="5.5" height="1" fill="#d8d8d8"/>
<rect x="1207" y="399" width="5.5" height="1" fill="#d8d8d8"/>
<path d="M1186,420 L1231,420 C1230,442 1223,462 1210,478 L1115,478 L1115,449 L1186,449 Z" fill="#eeeeed"/>
<path d="M1214,350 C1225,370 1231,392 1231,414 C1231,440 1224,460 1208,479" stroke="#d3d5d8" stroke-width="2.6" fill="none"/>
<path d="M1120,452 L1120,475" stroke="#cfcfcf" stroke-width="1"/>
<ellipse cx="1187" cy="380" rx="2.5" ry="5.5" fill="none" stroke="#333" stroke-width="1.2"/>
<rect x="1189" y="375" width="7" height="9" fill="#d6d8da"/>
<path d="M1146,464 L1160,460 L1164,472 L1150,476 Z" fill="#3b302c"/>
<path d="M1162,463 L1172,461 L1175,473 L1165,475 Z" fill="#f0f0f0"/>
<path d="M1174,460 L1185,458 L1188,470 L1177,472 Z" fill="#a6c1d1"/>
<path d="M1187,461 L1196,459 L1198,469 L1190,471 Z" fill="#3b302c"/>
<path d="M1200,449 L1209,446 L1215,456 L1206,460 Z" fill="#a6c1d1"/>
<path d="M1056,455 L1115,455 L1115,479 L1044,479 Z" fill="#f1f1f0"/>
<rect x="1068" y="455" width="0.8" height="24" fill="#cfcfcf"/>
<rect x="1103" y="456" width="11" height="22" fill="#8e8a86"/>
<circle cx="1080" cy="470" r="5.5" fill="#fafafa" stroke="#c8c8c8" stroke-width="0.8"/>
<path d="M1084,474 L1088,470 L1090,476 L1086,480 Z" fill="#9a9a9a"/>
<path d="M1118,354 L1125,362 L1125,424 L1057,424 L1050,415 L1118,415 Z" fill="#846655" opacity="0.75"/>
<rect x="1050.5" y="354" width="67.5" height="61" fill="#a48265"/>
<rect x="1051.3" y="354" width="20" height="13" fill="#e8e7e3"/>
<rect x="1051.3" y="402" width="20" height="13" fill="#e8e7e3"/>
<circle cx="1061.3" cy="374.4" r="6.3" fill="#fafafa"/>
<rect x="1052.8" y="372.4" width="1.5" height="4" fill="#222"/>
<circle cx="1061.3" cy="397.3" r="6.3" fill="#fafafa"/>
<rect x="1052.8" y="395.3" width="1.5" height="4" fill="#222"/>
<rect x="1074.2" y="354" width="20" height="13" fill="#e8e7e3"/>
<rect x="1074.2" y="402" width="20" height="13" fill="#e8e7e3"/>
<circle cx="1084.2" cy="374.4" r="6.3" fill="#fafafa"/>
<rect x="1075.7" y="372.4" width="1.5" height="4" fill="#222"/>
<circle cx="1084.2" cy="397.3" r="6.3" fill="#fafafa"/>
<rect x="1075.7" y="395.3" width="1.5" height="4" fill="#222"/>
<rect x="1097.2" y="354" width="20" height="13" fill="#e8e7e3"/>
<rect x="1097.2" y="402" width="20" height="13" fill="#e8e7e3"/>
<circle cx="1107.2" cy="374.4" r="6.3" fill="#fafafa"/>
<rect x="1098.7" y="372.4" width="1.5" height="4" fill="#222"/>
<circle cx="1107.2" cy="397.3" r="6.3" fill="#fafafa"/>
<rect x="1098.7" y="395.3" width="1.5" height="4" fill="#222"/>
<rect x="1152" y="367.7" width="22" height="23" fill="#846655" opacity="0.85"/>
<rect x="1148.4" y="363.7" width="21.4" height="22.5" fill="#ecece9"/>
<rect x="1158.5" y="364.7" width="0.8" height="20" fill="#cfcfcf"/>
<rect x="1145.5" y="365.7" width="2.5" height="19" fill="#222"/>
<rect x="1137" y="368.7" width="8.5" height="11" fill="#e6e6e4"/>
<rect x="1152" y="396.0" width="22" height="23" fill="#846655" opacity="0.85"/>
<rect x="1148.4" y="392.0" width="21.4" height="22.5" fill="#ecece9"/>
<rect x="1158.5" y="393.0" width="0.8" height="20" fill="#cfcfcf"/>
<rect x="1145.5" y="394.0" width="2.5" height="19" fill="#222"/>
<rect x="1137" y="397.0" width="8.5" height="11" fill="#e6e6e4"/>
<rect x="1205" y="313" width="1.6" height="21" fill="#8a7a70"/>
<rect x="1218" y="313" width="1.6" height="21" fill="#8a7a70"/>
<rect x="1232" y="313" width="1.6" height="21" fill="#8a7a70"/>
<rect x="1245" y="313" width="1.6" height="21" fill="#8a7a70"/>
<rect x="1145" y="496" width="1.6" height="19" fill="#7b6a60"/>
<rect x="1160" y="496" width="1.6" height="19" fill="#7b6a60"/>
<rect x="1175" y="496" width="1.6" height="19" fill="#7b6a60"/>
<path d="M1180,321 L1290,324" stroke="#8c7565" stroke-width="1.2"/>
<circle cx="1245" cy="325" r="1.5" fill="#222"/><circle cx="1213" cy="506" r="1.5" fill="#222"/><circle cx="1315" cy="502" r="1.5" fill="#222"/>
<path d="M960,313 L966,325 M1090,313 L1096,325 M960,515 L966,503 M1090,515 L1096,503" stroke="#8a7060" stroke-width="1"/>
<rect x="848" y="325" width="350" height="1" fill="#9a7a64" opacity="0.45"/>
<rect x="848" y="503" width="350" height="1" fill="#9a7a64" opacity="0.45"/>
<path d="M1468,366 L1492,366 C1497,375 1500,383 1500,391 L1468,391 Z" fill="none" stroke="#6b5040" stroke-width="0.8"/>
<path d="M1468,462 L1492,462 C1497,453 1500,445 1500,437 L1468,437 Z" fill="none" stroke="#6b5040" stroke-width="0.8"/>
<rect x="1471" y="404" width="26" height="15" rx="3" fill="#eeeeee"/>
<circle cx="1480" cy="410" r="3.5" fill="#3a3a3a"/>
<rect x="1497" y="411" width="50" height="6.5" fill="#2c2238"/>
<path d="M1556,411 L1566,407 L1574,402 L1577,405 L1572,414 L1578,423 L1575,426 L1566,420 L1556,417 Z" fill="#8a92ad"/>
<line x1="566" y1="414.5" x2="1610" y2="414.5" stroke="#3a3636" stroke-width="1" stroke-dasharray="7,2,1,2" opacity="0.45"/>
<g fill="#111"><path d="M592,815 L603,785.5 L607.5,785.5 L618.5,815 L612.5,815 L610,808 L600.5,808 L598,815 Z M602.3,802.5 L608.2,802.5 L605.3,794 Z"/><path d="M620,785.5 L625.5,785.5 L625.5,803 Q625.5,810 631.5,810 Q637.5,810 637.5,803 L637.5,785.5 L643,785.5 L643,803 Q643,815.5 631.5,815.5 Q620,815.5 620,803 Z"/><path d="M644,815 L644,785.5 L655,785.5 Q665.5,785.5 665.5,795 Q665.5,802.5 658.5,804 L666,815 L659.5,815 L652.5,804.3 L649.5,804.3 L649.5,815 Z M649.5,790.5 L649.5,799.5 L654.5,799.5 Q660,799.5 660,795 Q660,790.5 654.5,790.5 Z"/><path fill-rule="evenodd" d="M683,785 A15,15 0 1,1 683,815.5 A15,15 0 1,1 683,785 Z M683,791 A9.3,9.3 0 1,0 683,809.5 A9.3,9.3 0 1,0 683,791 Z"/><path d="M699,815 L699,785.5 L710,785.5 Q720.5,785.5 720.5,795 Q720.5,802.5 713.5,804 L721,815 L714.5,815 L707.5,804.3 L704.5,804.3 L704.5,815 Z M704.5,790.5 L704.5,799.5 L709.5,799.5 Q715,799.5 715,795 Q715,790.5 709.5,790.5 Z"/><path d="M723,815 L734,785.5 L738.5,785.5 L749.5,815 L743.5,815 L741,808 L731.5,808 L729,815 Z M733.3,802.5 L739.2,802.5 L736.3,794 Z"/></g>
<text x="592" y="825" font-family="Liberation Sans" font-size="5.2" font-weight="bold" fill="#444" letter-spacing="7.2">MARINE AGENCY</text>
<text x="591.5" y="840.6" font-family="Liberation Sans" font-size="15.5" letter-spacing="0.35" fill="#111">aurora-yacht.com</text>
<text x="1348" y="820.4" font-family="Liberation Sans" font-size="14.1" fill="#111">+372 555 909 02 | help@aurora-yacht.com</text>
</g>
</svg>

</body></html>
